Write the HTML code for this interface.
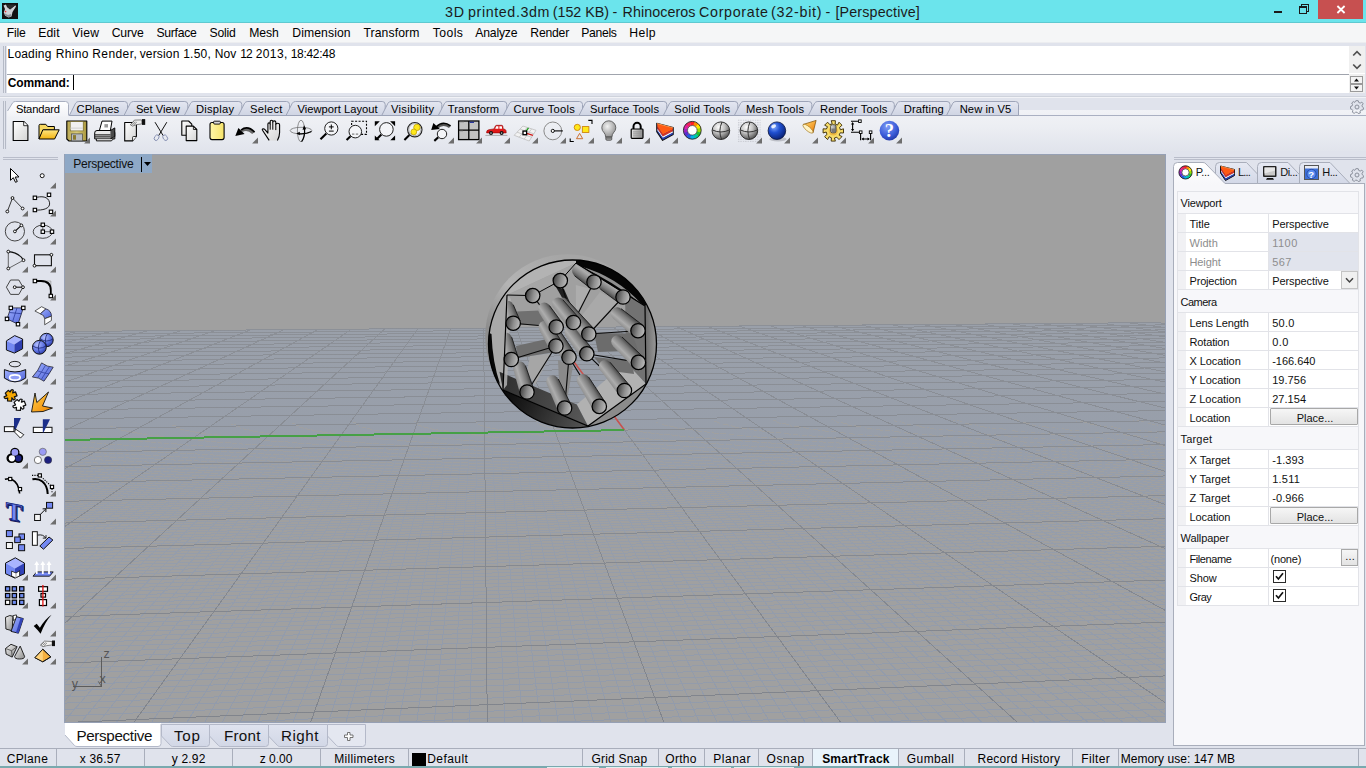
<!DOCTYPE html>
<html lang="en"><head><meta charset="utf-8"><title>3D printed.3dm - Rhinoceros</title>
<style>
*{box-sizing:border-box;margin:0;padding:0}
html,body{width:1366px;height:768px;overflow:hidden}
body{position:relative;background:#e0e3ec;font-family:"Liberation Sans",sans-serif;font-size:12px;color:#000;-webkit-font-smoothing:antialiased}
.a{position:absolute;white-space:nowrap}
#title{left:0;top:0;width:1366px;height:23px;background:#6be4ec;border-bottom:1px solid #5fc9d0}
#menu{left:0;top:23px;width:1366px;height:19px;background:#f5f6f7}
#menul{left:0;top:42px;width:1366px;height:1px;background:#ecedf0}
#hist{left:7px;top:46px;width:1358px;height:47px;background:#fff}
#hsep{left:7px;top:74px;width:1342px;height:1px;background:#a0a4ad}
.grip{background:#b5bac6;width:1px}
</style></head><body>

<div class="a" id="title"></div>
<svg class="a" style="left:2px;top:3px" width="16" height="16" viewBox="0 0 16 16">
<rect width="16" height="16" fill="#111"/>
<path d="M1.5 2.5 L4 1.5 L5 4 L8 6.5 L13.5 2.2 L14 3.5 L10.5 9 L9.5 13.5 L6.5 14.5 L3 12.5 L1.8 9.5 L3 6 Z" fill="#cfd2d6"/>
<path d="M5 1.5 L13 1.5 L13.2 2.3 L8.2 6.2 L5.6 4.2 Z" fill="#2b2b2b"/>
<path d="M2 10 L4 13 L7 14.3 L8.8 13.6 L9.2 11 L6 12 Z" fill="#8b9097"/>
<circle cx="3.6" cy="8.6" r="0.8" fill="#e33"/>
</svg>
<div class="a" style="left:1274px;top:11px;width:8px;height:2px;background:#1a1a1a"></div>
<svg class="a" style="left:1298px;top:3px" width="12" height="12" viewBox="0 0 12 12" shape-rendering="crispEdges">
<path d="M3.5 3.5V1.5H10.5V8.5H8.5" fill="none" stroke="#1a1a1a" stroke-width="1"/>
<rect x="1.5" y="4.5" width="7" height="6" fill="none" stroke="#1a1a1a" stroke-width="1"/><rect x="1" y="3" width="8" height="2" fill="#1a1a1a"/></svg>
<div class="a" style="left:1318px;top:0;width:45px;height:19px;background:#c75050"></div>
<svg class="a" style="left:1336px;top:5px" width="10" height="9" viewBox="0 0 10 9"><path d="M1.4 1L8.6 8M8.6 1L1.4 8" stroke="#fff" stroke-width="1.8"/></svg>
<div class="a" id="menu"></div><div class="a" id="menul"></div>
<div class="a grip" style="left:3px;top:46px;height:47px"></div><div class="a grip" style="left:5px;top:46px;height:47px"></div>
<div class="a" id="hist"></div><div class="a" id="hsep"></div>
<div class="a" style="left:1349px;top:46px;width:16px;height:27px;background:#f0f0f0"></div>
<div class="a" style="left:1349px;top:74px;width:16px;height:19px;background:#f0f0f0"></div>
<svg class="a" style="left:1352px;top:49px" width="10" height="22" viewBox="0 0 10 22"><path d="M1.2 6.5L5 2.7L8.8 6.5M1.2 15.5L5 19.3L8.8 15.5" fill="none" stroke="#505050" stroke-width="1.7"/></svg>
<svg class="a" style="left:1350px;top:75px" width="14" height="18" viewBox="0 0 14 18"><rect x="0.5" y="1.5" width="12" height="7" fill="#f3f3f3" stroke="#9a9a9a"/><rect x="0.5" y="9.5" width="12" height="7" fill="#f3f3f3" stroke="#9a9a9a"/><path d="M4 6.5L6.5 3.5L9 6.5ZM4 11.5L6.5 14.5L9 11.5Z" fill="#111"/></svg>
<div class="a" style="left:73px;top:75px;width:1px;height:15px;background:#000"></div>
<div class="a" style="left:0;top:96px;width:1366px;height:1px;background:#cfd3dc"></div><div class="a" style="left:0;top:97px;width:1366px;height:1px;background:#f2f3f7"></div>
<div class="a" style="left:7px;top:110px;width:1359px;height:41px;background:linear-gradient(#f1f2f6,#eceef3 40%,#e1e4ec)"></div>
<div class="a grip" style="left:3px;top:101px;height:48px"></div><div class="a grip" style="left:5px;top:101px;height:48px"></div>
<svg class="a" style="left:0;top:98px" width="1366" height="20" viewBox="0 98 1366 20"><defs><linearGradient id="tg" x1="0" y1="0" x2="0" y2="1"><stop offset="0" stop-color="#e4e7f1"/><stop offset="1" stop-color="#cfd4e3"/></linearGradient><linearGradient id="tga" x1="0" y1="0" x2="0" y2="1"><stop offset="0" stop-color="#ffffff"/><stop offset="1" stop-color="#f1f2f6"/></linearGradient></defs><path d="M69 115.5H1366" stroke="#aab0c2" stroke-width="1"/><path d="M69.3 115.5 L75.6 103.2 Q76.5 101.5 78.9 101.5 H124.5 Q127.5 101.5 127.5 104.5 V115.5 Z" fill="url(#tg)" stroke="#9da4b8" stroke-width="1"/><path d="M124.0 115.5 L130.3 103.2 Q131.2 101.5 133.6 101.5 H184.8 Q187.8 101.5 187.8 104.5 V115.5 Z" fill="url(#tg)" stroke="#9da4b8" stroke-width="1"/><path d="M184.3 115.5 L190.6 103.2 Q191.5 101.5 193.9 101.5 H238.8 Q241.8 101.5 241.8 104.5 V115.5 Z" fill="url(#tg)" stroke="#9da4b8" stroke-width="1"/><path d="M238.3 115.5 L244.6 103.2 Q245.5 101.5 247.9 101.5 H286.5 Q289.5 101.5 289.5 104.5 V115.5 Z" fill="url(#tg)" stroke="#9da4b8" stroke-width="1"/><path d="M286.0 115.5 L292.3 103.2 Q293.2 101.5 295.6 101.5 H382.2 Q385.2 101.5 385.2 104.5 V115.5 Z" fill="url(#tg)" stroke="#9da4b8" stroke-width="1"/><path d="M381.7 115.5 L388.0 103.2 Q388.9 101.5 391.3 101.5 H438.8 Q441.8 101.5 441.8 104.5 V115.5 Z" fill="url(#tg)" stroke="#9da4b8" stroke-width="1"/><path d="M438.3 115.5 L444.6 103.2 Q445.5 101.5 447.9 101.5 H503.8 Q506.8 101.5 506.8 104.5 V115.5 Z" fill="url(#tg)" stroke="#9da4b8" stroke-width="1"/><path d="M503.3 115.5 L509.6 103.2 Q510.5 101.5 512.9 101.5 H579.5 Q582.5 101.5 582.5 104.5 V115.5 Z" fill="url(#tg)" stroke="#9da4b8" stroke-width="1"/><path d="M579.0 115.5 L585.3 103.2 Q586.2 101.5 588.6 101.5 H663.8 Q666.8 101.5 666.8 104.5 V115.5 Z" fill="url(#tg)" stroke="#9da4b8" stroke-width="1"/><path d="M663.3 115.5 L669.6 103.2 Q670.5 101.5 672.9 101.5 H734.8 Q737.8 101.5 737.8 104.5 V115.5 Z" fill="url(#tg)" stroke="#9da4b8" stroke-width="1"/><path d="M734.3 115.5 L740.6 103.2 Q741.5 101.5 743.9 101.5 H808.8 Q811.8 101.5 811.8 104.5 V115.5 Z" fill="url(#tg)" stroke="#9da4b8" stroke-width="1"/><path d="M808.3 115.5 L814.6 103.2 Q815.5 101.5 817.9 101.5 H891.3 Q894.3 101.5 894.3 104.5 V115.5 Z" fill="url(#tg)" stroke="#9da4b8" stroke-width="1"/><path d="M890.8 115.5 L897.1 103.2 Q898.0 101.5 900.4 101.5 H947.0 Q950.0 101.5 950.0 104.5 V115.5 Z" fill="url(#tg)" stroke="#9da4b8" stroke-width="1"/><path d="M946.5 115.5 L952.8 103.2 Q953.7 101.5 956.1 101.5 H1015.5 Q1018.5 101.5 1018.5 104.5 V115.5 Z" fill="url(#tg)" stroke="#9da4b8" stroke-width="1"/><path d="M7.5 111 L12.8 102.6 Q13.6 101.5 15.5 101.5 H65.5 Q68.5 101.5 68.5 104.5 V116.5 H7.5 Z" fill="url(#tga)"/><path d="M7.5 111 L12.8 102.6 Q13.6 101.5 15.5 101.5 H65.5 Q68.5 101.5 68.5 104.5 V115.5" fill="none" stroke="#a9afc0" stroke-width="1"/></svg>
<svg class="a" style="left:1350px;top:100px" width="14" height="14" viewBox="-7 -7 14 14"><g fill="none" stroke="#8a8f9b" stroke-width="1"><circle r="2"/><path d="M-1.2 -6.3H1.2L1.7 -4.6L3.2 -3.9L4.8 -4.9L6.2 -3.2L5 -1.7L5.3 -0.2L6.6 0.8L5.9 3L4.2 3L3.1 4.2L3.3 6L1.2 6.5L0 5.2L-1.6 5.3L-2.8 6.4L-4.6 5.2L-4.2 3.6L-5.1 2.3L-6.6 1.8L-6.5 -0.4L-5 -1L-4.5 -2.5L-5.3 -4L-3.7 -5.4L-2.3 -4.6Z"/></g></svg>
<svg class="a" style="left:1350px;top:168px" width="14" height="14" viewBox="-7 -7 14 14"><g fill="none" stroke="#8a8f9b" stroke-width="1"><circle r="2"/><path d="M-1.2 -6.3H1.2L1.7 -4.6L3.2 -3.9L4.8 -4.9L6.2 -3.2L5 -1.7L5.3 -0.2L6.6 0.8L5.9 3L4.2 3L3.1 4.2L3.3 6L1.2 6.5L0 5.2L-1.6 5.3L-2.8 6.4L-4.6 5.2L-4.2 3.6L-5.1 2.3L-6.6 1.8L-6.5 -0.4L-5 -1L-4.5 -2.5L-5.3 -4L-3.7 -5.4L-2.3 -4.6Z"/></g></svg>
<div class="a" style="left:0;top:748px;width:1366px;height:18px;background:#e0e3ec;border-top:1px solid #a9aebb"></div>
<div class="a" style="left:0;top:766px;width:1366px;height:2px;background:#79a9ae"></div>
<div class="a" style="left:547px;top:767px;width:52px;height:1px;background:#e4eef0"></div>
<div class="a" style="left:606px;top:767px;width:62px;height:1px;background:#e4eef0"></div>
<div class="a" style="left:672px;top:767px;width:59px;height:1px;background:#e4eef0"></div>
<div class="a" style="left:734px;top:767px;width:60px;height:1px;background:#e4eef0"></div>
<div class="a" style="left:813px;top:749px;width:85px;height:17px;background:#e9f3fb"></div>
<div class="a" style="left:56px;top:749px;width:1px;height:17px;background:#a9aebb"></div>
<div class="a" style="left:144px;top:749px;width:1px;height:17px;background:#a9aebb"></div>
<div class="a" style="left:232px;top:749px;width:1px;height:17px;background:#a9aebb"></div>
<div class="a" style="left:320px;top:749px;width:1px;height:17px;background:#a9aebb"></div>
<div class="a" style="left:408px;top:749px;width:1px;height:17px;background:#a9aebb"></div>
<div class="a" style="left:582px;top:749px;width:1px;height:17px;background:#a9aebb"></div>
<div class="a" style="left:658px;top:749px;width:1px;height:17px;background:#a9aebb"></div>
<div class="a" style="left:704px;top:749px;width:1px;height:17px;background:#a9aebb"></div>
<div class="a" style="left:758px;top:749px;width:1px;height:17px;background:#a9aebb"></div>
<div class="a" style="left:812px;top:749px;width:1px;height:17px;background:#a9aebb"></div>
<div class="a" style="left:898px;top:749px;width:1px;height:17px;background:#a9aebb"></div>
<div class="a" style="left:964px;top:749px;width:1px;height:17px;background:#a9aebb"></div>
<div class="a" style="left:1072px;top:749px;width:1px;height:17px;background:#a9aebb"></div>
<div class="a" style="left:1118px;top:749px;width:1px;height:17px;background:#a9aebb"></div>
<div class="a" style="left:1358px;top:749px;width:1px;height:17px;background:#a9aebb"></div>
<div class="a" style="left:412px;top:753px;width:14px;height:13px;background:#000"></div>
<svg class="a" style="left:60px;top:722px" width="320" height="26" viewBox="60 722 320 26"><defs><linearGradient id="vg" x1="0" y1="0" x2="0" y2="1"><stop offset="0" stop-color="#dfe3ef"/><stop offset="1" stop-color="#d2d7e6"/></linearGradient></defs><path d="M327.5 724.5 H365.5 V743.5 Q365.5 746.5 362.5 746.5 H338.5 Q337.5 746.5 336.5 745.5 L327.5 736 Z" fill="#e4e7f0" stroke="#b4b9c9" stroke-width="1"/><path d="M161.5 724.5 H209.5 V743.5 Q209.5 746.5 206.5 746.5 H172.5 Q171.5 746.5 170.5 745.5 L161.5 736 Z" fill="url(#vg)" stroke="#b4b9c9" stroke-width="1"/><path d="M209.5 724.5 H268.5 V743.5 Q268.5 746.5 265.5 746.5 H220.5 Q219.5 746.5 218.5 745.5 L209.5 736 Z" fill="url(#vg)" stroke="#b4b9c9" stroke-width="1"/><path d="M268.5 724.5 H327.5 V743.5 Q327.5 746.5 324.5 746.5 H279.5 Q278.5 746.5 277.5 745.5 L268.5 736 Z" fill="url(#vg)" stroke="#b4b9c9" stroke-width="1"/><path d="M65 723 H161 V743.5 Q161 746.5 158 746.5 H77 Q75.5 746.5 74.5 745.5 L65 735 Z" fill="#fff"/><path d="M65 735 L74.5 745.5 Q75.5 746.5 77 746.5 H158 Q161 746.5 161 743.5 V724" fill="none" stroke="#b4b9c9" stroke-width="1"/><path d="M347.5 732.5h2.5v2.5h3v2.5h-3v3h-2.5v-3h-3v-2.5h3z" fill="#fff" stroke="#666" stroke-width="0.9"/></svg>
<svg class="a" style="left:64px;top:154px;background:#a0a0a0" width="1102" height="569" viewBox="0 0 1102 569">
<defs><linearGradient id="gmn" gradientUnits="userSpaceOnUse" x1="0" y1="170" x2="0" y2="568"><stop offset="0" stop-color="#9aa0aa"/><stop offset="1" stop-color="#929bab"/></linearGradient><linearGradient id="gmj" gradientUnits="userSpaceOnUse" x1="0" y1="170" x2="0" y2="568"><stop offset="0" stop-color="#8c9097"/><stop offset="1" stop-color="#80848c"/></linearGradient></defs>
<g shape-rendering="crispEdges" fill="none" stroke-width="1"><path stroke="url(#gmn)" d="M1104 170.3L1091.1 168.6M1104 170.6L1088.3 168.7M1104 171L1085.4 168.7M1104 171.4L1082.5 168.7M1104 171.8L1079.6 168.7M1104 172.3L1076.7 168.8M1104 172.7L1073.8 168.8M1104 173.1L1070.9 168.8M1104 173.5L1068.1 168.8M1104 174.3L1062.3 168.9M1104 174.8L1059.4 168.9M1104 175.2L1056.5 168.9M1104 175.6L1053.6 169M1104 176.1L1050.7 169M1104 176.5L1047.8 169M1104 177L1044.9 169M1104 177.4L1042 169M1104 177.9L1039.1 169.1M1104 178.8L1033.2 169.1M1104 179.3L1030.3 169.1M1104 179.8L1027.4 169.2M1104 180.3L1024.5 169.2M1104 180.8L1021.6 169.2M1104 181.3L1018.7 169.2M1104 181.8L1015.7 169.3M1104 182.3L1012.8 169.3M1104 182.8L1009.9 169.3M1104 183.8L1004 169.4M1104 184.3L1001.1 169.4M1104 184.9L998.2 169.4M1104 185.4L995.2 169.4M1104 186L992.3 169.5M1104 186.5L989.4 169.5M1104 187.1L986.4 169.5M1104 187.6L983.5 169.5M1104 188.2L980.6 169.5M1104 189.3L974.7 169.6M1104 189.9L971.7 169.6M1104 190.5L968.8 169.6M1104 191.1L965.8 169.7M1104 191.7L962.9 169.7M1104 192.3L959.9 169.7M1104 193L957 169.7M1104 193.6L954 169.8M1104 194.2L951.1 169.8M1104 195.5L945.2 169.8M1104 196.2L942.2 169.9M1104 196.9L939.2 169.9M1104 197.5L936.3 169.9M1104 198.2L933.3 169.9M1104 198.9L930.3 170M1104 199.6L927.4 170M1104 200.3L924.4 170M1104 201L921.4 170M1104 202.5L915.5 170.1M1104 203.2L912.5 170.1M1104 204L909.5 170.1M1104 204.7L906.5 170.2M1104 205.5L903.5 170.2M1104 206.3L900.5 170.2M1104 207.1L897.6 170.2M1104 207.9L894.6 170.2M1104 208.7L891.6 170.3M1104 210.4L885.6 170.3M1104 211.2L882.6 170.3M1104 212.1L879.6 170.4M1104 213L876.6 170.4M1104 213.8L873.6 170.4M1104 214.7L870.6 170.4M1104 215.6L867.6 170.5M1104 216.6L864.6 170.5M1104 217.5L861.6 170.5M1104 219.4L855.6 170.6M1104 220.4L852.5 170.6M1104 221.4L849.5 170.6M1104 222.4L846.5 170.6M1104 223.4L843.5 170.7M1104 224.4L840.5 170.7M1104 225.5L837.5 170.7M1104 226.5L834.4 170.7M1104 227.6L831.4 170.8M1104 229.8L825.4 170.8M1104 231L822.3 170.8M1104 569.4L1070.9 571M1104 232.1L819.3 170.9M1104 562L910 571M1104 233.3L816.3 170.9M1104 554.8L749.1 571M1104 234.5L813.2 170.9M1104 547.8L588.1 571M1104 235.7L810.2 170.9M1104 541L427.2 571M1104 236.9L807.1 171M1104 534.4L266.3 571M1104 238.1L804.1 171M1104 528L105.4 571M1104 239.4L801.1 171M1104 515.7L-2 562M1104 242L795 171.1M1104 509.8L-2 555.5M1104 243.3L791.9 171.1M1104 504.1L-2 549.2M1104 244.7L788.9 171.1M1104 498.5L-2 543M1104 246L785.8 171.1M1104 493.1L-2 537M1104 247.4L782.8 171.2M1104 487.8L-2 531.1M1104 248.9L779.7 171.2M1104 482.7L-2 525.4M1104 250.3L776.7 171.2M1104 477.6L-2 519.8M1104 251.8L773.6 171.2M1104 472.7L-2 514.4M1104 253.3L770.5 171.3M1104 463.3L-2 504M1104 256.4L764.4 171.3M1104 458.7L-2 498.9M1104 258L761.4 171.3M1104 454.3L-2 494M1104 259.6L758.3 171.4M1104 450L-2 489.2M1104 261.2L755.2 171.4M1104 445.7L-2 484.5M1104 262.9L752.1 171.4M1104 441.6L-2 479.9M1104 264.6L749.1 171.4M1104 437.5L-2 475.4M1104 266.4L746 171.5M1104 433.6L-2 471.1M1104 268.1L742.9 171.5M1104 429.7L-2 466.8M1104 269.9L739.8 171.5M1104 422.2L-2 458.5M1104 273.7L733.7 171.6M1104 418.6L-2 454.5M1104 275.6L730.6 171.6M1104 415.1L-2 450.6M1104 277.6L727.5 171.6M1104 411.6L-2 446.7M1104 279.6L724.4 171.6M1104 408.2L-2 443M1104 281.6L721.3 171.7M1104 404.9L-2 439.3M1104 283.7L718.3 171.7M1104 401.6L-2 435.7M1104 285.8L715.2 171.7M1104 398.4L-2 432.1M1104 288L712.1 171.7M1104 395.3L-2 428.6M1104 290.2L709 171.8M1104 389.2L-2 421.9M1104 294.9L702.8 171.8M1104 386.3L-2 418.7M1104 297.2L699.7 171.8M1104 383.4L-2 415.4M1104 299.7L696.6 171.9M1104 380.5L-2 412.3M1104 302.2L693.5 171.9M1104 377.7L-2 409.2M1104 304.7L690.4 171.9M1104 375L-2 406.2M1104 307.3L687.3 171.9M1104 372.3L-2 403.2M1104 310L684.1 172M1104 369.7L-2 400.3M1104 312.7L681 172M1104 367.1L-2 397.4M1104 315.5L677.9 172M1104 362.1L-2 391.9M1104 321.4L671.7 172.1M1104 359.6L-2 389.2M1104 324.4L668.6 172.1M1104 357.2L-2 386.5M1104 327.5L665.4 172.1M1104 354.9L-2 383.9M1104 330.7L662.3 172.1M1104 352.5L-2 381.3M1104 333.9L659.2 172.2M1104 350.2L-2 378.8M1104 337.3L656.1 172.2M1104 348L-2 376.3M1104 340.8L652.9 172.2M1104 345.8L-2 373.8M1104 344.3L649.8 172.2M1104 343.6L-2 371.4M1104 347.9L646.7 172.3M1104 339.4L-2 366.7M1104 355.5L640.4 172.3M1104 337.3L-2 364.4M1104 359.5L637.3 172.3M1104 335.3L-2 362.2M1104 363.6L634.1 172.4M1104 333.3L-2 360M1104 367.8L631 172.4M1104 331.3L-2 357.8M1104 372.1L627.9 172.4M1104 329.4L-2 355.6M1104 376.6L624.7 172.4M1104 327.5L-2 353.5M1104 381.2L621.6 172.5M1104 325.6L-2 351.5M1104 386L618.4 172.5M1104 323.7L-2 349.4M1104 390.9L615.3 172.5M1104 320.1L-2 345.4M1104 401.2L609 172.6M1104 318.3L-2 343.4M1104 406.7L605.8 172.6M1104 316.6L-2 341.5M1104 412.3L602.6 172.6M1104 314.9L-2 339.6M1104 418.1L599.5 172.7M1104 313.2L-2 337.7M1104 424.2L596.3 172.7M1104 311.5L-2 335.9M1104 430.4L593.2 172.7M1104 309.9L-2 334.1M1104 436.9L590 172.7M1104 308.3L-2 332.3M1104 443.6L586.8 172.8M1104 306.7L-2 330.5M1104 450.6L583.7 172.8M1104 303.6L-2 327.1M1104 465.5L577.3 172.8M1104 302L-2 325.4M1104 473.4L574.1 172.9M1104 300.5L-2 323.7M1104 481.6L571 172.9M1104 299L-2 322.1M1104 490.2L567.8 172.9M1104 297.6L-2 320.4M1104 499.2L564.6 172.9M1104 296.1L-2 318.8M1104 508.5L561.4 173M1104 294.7L-2 317.3M1104 518.3L558.2 173M1104 293.3L-2 315.7M1104 528.6L555.1 173M1104 291.9L-2 314.2M1104 539.3L551.9 173M1104 289.2L-2 311.1M1104 562.5L545.5 173.1M1104 287.8L-2 309.7M1098.4 571L542.3 173.1M1104 286.5L-2 308.2M1080.7 571L539.1 173.1M1104 285.2L-2 306.8M1062.9 571L535.9 173.2M1104 283.9L-2 305.3M1045.1 571L532.7 173.2M1104 282.7L-2 303.9M1027.4 571L529.5 173.2M1104 281.4L-2 302.6M1009.6 571L526.3 173.2M1104 280.2L-2 301.2M991.8 571L523.1 173.3M1104 279L-2 299.8M974.1 571L519.9 173.3M1104 276.6L-2 297.2M938.5 571L513.5 173.4M1104 275.4L-2 295.9M920.8 571L510.3 173.4M1104 274.2L-2 294.6M903 571L507.1 173.4M1104 273.1L-2 293.3M885.2 571L503.8 173.4M1104 272L-2 292.1M867.5 571L500.6 173.5M1104 270.8L-2 290.8M849.7 571L497.4 173.5M1104 269.7L-2 289.6M831.9 571L494.2 173.5M1104 268.6L-2 288.4M814.2 571L491 173.5M1104 267.6L-2 287.2M796.4 571L487.7 173.6M1104 265.4L-2 284.8M760.9 571L481.3 173.6M1104 264.4L-2 283.7M743.1 571L478.1 173.6M1104 263.4L-2 282.5M725.4 571L474.8 173.7M1104 262.3L-2 281.4M707.6 571L471.6 173.7M1104 261.3L-2 280.3M689.8 571L468.4 173.7M1104 260.3L-2 279.2M672.1 571L465.1 173.7M1104 259.3L-2 278.1M654.3 571L461.9 173.8M1104 258.4L-2 277M636.5 571L458.6 173.8M1104 257.4L-2 276M618.8 571L455.4 173.8M1104 255.5L-2 273.9M583.2 571L448.9 173.9M1104 254.6L-2 272.8M565.5 571L445.6 173.9M1104 253.7L-2 271.8M547.7 571L442.4 173.9M1104 252.7L-2 270.8M529.9 571L439.1 174M1104 251.8L-2 269.8M512.2 571L435.9 174M1104 251L-2 268.8M494.4 571L432.6 174M1104 250.1L-2 267.8M476.6 571L429.4 174M1104 249.2L-2 266.9M458.9 571L426.1 174.1M1104 248.3L-2 265.9M441.1 571L422.8 174.1M1104 246.6L-2 264M405.6 571L416.3 174.1M1104 245.8L-2 263.1M387.8 571L413 174.2M1104 245L-2 262.2M370 571L409.8 174.2M1104 244.1L-2 261.3M352.3 571L406.5 174.2M1104 243.3L-2 260.4M334.5 571L403.2 174.2M1104 242.5L-2 259.5M316.8 571L399.9 174.3M1104 241.7L-2 258.6M299 571L396.7 174.3M1104 240.9L-2 257.7M281.2 571L393.4 174.3M1104 240.2L-2 256.9M263.5 571L390.1 174.4M1104 238.6L-2 255.1M227.9 571L383.5 174.4M1104 237.9L-2 254.3M210.2 571L380.2 174.4M1104 237.1L-2 253.5M192.4 571L376.9 174.5M1104 236.4L-2 252.7M174.6 571L373.7 174.5M1104 235.6L-2 251.8M156.9 571L370.4 174.5M1104 234.9L-2 251M139.1 571L367.1 174.5M1104 234.2L-2 250.2M121.3 571L363.8 174.6M1104 233.5L-2 249.4M103.6 571L360.5 174.6M1104 232.8L-2 248.7M85.8 571L357.2 174.6M1104 231.4L-2 247.1M50.3 571L350.6 174.7M1104 230.7L-2 246.4M32.5 571L347.2 174.7M1104 230L-2 245.6M14.7 571L343.9 174.7M1104 229.3L-2 244.9M-2 569.8L340.6 174.8M1104 228.7L-2 244.1M-2 550.2L337.3 174.8M1104 228L-2 243.4M-2 532.1L334 174.8M1104 227.3L-2 242.7M-2 515.4L330.7 174.8M1104 226.7L-2 241.9M-2 499.9L327.4 174.9M1104 226L-2 241.2M-2 485.4L324 174.9M1104 224.8L-2 239.8M-2 459.3L317.4 174.9M1104 224.1L-2 239.1M-2 447.5L314.1 175M1104 223.5L-2 238.4M-2 436.5L310.7 175M1104 222.9L-2 237.7M-2 426L307.4 175M1104 222.3L-2 237.1M-2 416.2L304.1 175.1M1104 221.7L-2 236.4M-2 406.9L300.7 175.1M1104 221.1L-2 235.7M-2 398.2L297.4 175.1M1104 220.5L-2 235.1M-2 389.9L294 175.1M1104 219.9L-2 234.4M-2 382L290.7 175.2M1104 218.7L-2 233.1M-2 367.4L284 175.2M1104 218.2L-2 232.5M-2 360.6L280.7 175.2M1104 217.6L-2 231.9M-2 354.2L277.3 175.3M1104 217L-2 231.2M-2 348L274 175.3M1104 216.5L-2 230.6M-2 342.1L270.6 175.3M1104 215.9L-2 230M-2 336.5L267.2 175.4M1104 215.4L-2 229.4M-2 331.1L263.9 175.4M1104 214.8L-2 228.8M-2 325.9L260.5 175.4M1104 214.3L-2 228.2M-2 321L257.2 175.4M1104 213.2L-2 227M-2 311.7L250.4 175.5M1104 212.7L-2 226.4M-2 307.3L247.1 175.5M1104 212.1L-2 225.8M-2 303.1L243.7 175.5M1104 211.6L-2 225.3M-2 299L240.3 175.6M1104 211.1L-2 224.7M-2 295.1L236.9 175.6M1104 210.6L-2 224.1M-2 291.3L233.6 175.6M1104 210.1L-2 223.6M-2 287.7L230.2 175.7M1104 209.6L-2 223M-2 284.2L226.8 175.7M1104 209.1L-2 222.4M-2 280.8L223.4 175.7M1104 208.1L-2 221.4M-2 274.3L216.7 175.8M1104 207.6L-2 220.8M-2 271.2L213.3 175.8M1104 207.1L-2 220.3M-2 268.3L209.9 175.8M1104 206.7L-2 219.8M-2 265.4L206.5 175.9M1104 206.2L-2 219.2M-2 262.6L203.1 175.9M1104 205.7L-2 218.7M-2 259.9L199.7 175.9M1104 205.2L-2 218.2M-2 257.3L196.3 175.9M1104 204.8L-2 217.7M-2 254.7L192.9 176M1104 204.3L-2 217.2M-2 252.2L189.5 176M1104 203.4L-2 216.1M-2 247.5L182.7 176M1104 202.9L-2 215.6M-2 245.2L179.3 176.1M1104 202.5L-2 215.2M-2 243L175.8 176.1M1104 202.1L-2 214.7M-2 240.9L172.4 176.1M1104 201.6L-2 214.2M-2 238.8L169 176.2M1104 201.2L-2 213.7M-2 236.8L165.6 176.2M1104 200.7L-2 213.2M-2 234.8L162.2 176.2M1104 200.3L-2 212.7M-2 232.8L158.8 176.2M1104 199.9L-2 212.3M-2 231L155.3 176.3M1104 199L-2 211.3M-2 227.3L148.5 176.3M1104 198.6L-2 210.9M-2 225.6L145 176.4M1104 198.2L-2 210.4M-2 223.9L141.6 176.4M1104 197.8L-2 209.9M-2 222.2L138.2 176.4M1104 197.4L-2 209.5M-2 220.6L134.7 176.4M1104 197L-2 209M-2 219L131.3 176.5M1104 196.6L-2 208.6M-2 217.5L127.9 176.5M1104 196.2L-2 208.1M-2 216L124.4 176.5M1104 195.8L-2 207.7M-2 214.5L121 176.5M1104 195L-2 206.8M-2 211.6L114.1 176.6M1104 194.6L-2 206.4M-2 210.2L110.6 176.6M1104 194.2L-2 206M-2 208.9L107.2 176.7M1104 193.8L-2 205.5M-2 207.6L103.7 176.7M1104 193.4L-2 205.1M-2 206.3L100.3 176.7M1104 193.1L-2 204.7M-2 205L96.8 176.7M1104 192.7L-2 204.3M-2 203.7L93.3 176.8M1104 192.3L-2 203.9M-2 202.5L89.9 176.8M1104 191.9L-2 203.5M-2 201.3L86.4 176.8M1104 191.2L-2 202.7M-2 199L79.5 176.9M1104 190.8L-2 202.2M-2 197.9L76 176.9M1104 190.5L-2 201.8M-2 196.8L72.5 176.9M1104 190.1L-2 201.5M-2 195.7L69 177M1104 189.8L-2 201.1M-2 194.7L65.6 177M1104 189.4L-2 200.7M-2 193.6L62.1 177M1104 189.1L-2 200.3M-2 192.6L58.6 177.1M1104 188.7L-2 199.9M-2 191.6L55.1 177.1M1104 188.4L-2 199.5M-2 190.6L51.6 177.1M1104 187.7L-2 198.7M-2 188.7L44.6 177.2M1104 187.3L-2 198.4M-2 187.8L41.2 177.2M1104 187L-2 198M-2 186.9L37.7 177.2M1104 186.7L-2 197.6M-2 186L34.2 177.3M1104 186.3L-2 197.3M-2 185.1L30.7 177.3M1104 186L-2 196.9M-2 184.2L27.2 177.3M1104 185.7L-2 196.5M-2 183.4L23.6 177.3M1104 185.4L-2 196.2M-2 182.5L20.1 177.4M1104 185L-2 195.8M-2 181.7L16.6 177.4M1104 184.4L-2 195.1M-2 180.1L9.6 177.5M1104 184.1L-2 194.7M-2 179.3L6.1 177.5M1104 183.8L-2 194.4M-2 178.5L2.6 177.5M1104 183.4L-2 194M-2 177.8L-0.9 177.5M1104 183.1L-2 193.7M1104 182.8L-2 193.4M1104 182.5L-2 193M1104 182.2L-2 192.7M1104 181.9L-2 192.3M1104 181.3L-2 191.7M1104 181L-2 191.3M1104 180.7L-2 191M1104 180.4L-2 190.7M1104 180.1L-2 190.4M1104 179.8L-2 190M1104 179.5L-2 189.7M1104 179.2L-2 189.4M1104 179L-2 189.1M1104 178.4L-2 188.4M1104 178.1L-2 188.1M1104 177.8L-2 187.8M1104 177.5L-2 187.5M1104 177.3L-2 187.2M1104 177L-2 186.9M1104 176.7L-2 186.6M1104 176.5L-2 186.3M1104 176.2L-2 186M1104 175.6L-2 185.4M1104 175.4L-2 185.1M1104 175.1L-2 184.8M1104 174.9L-2 184.5M1104 174.6L-2 184.3M1104 174.3L-2 184M1104 174.1L-2 183.7M1104 173.8L-2 183.4M1104 173.6L-2 183.1M1104 173.1L-2 182.6M1104 172.8L-2 182.3M1104 172.6L-2 182M1104 172.3L-2 181.7M1104 172.1L-2 181.5M1104 171.8L-2 181.2M1104 171.6L-2 180.9M1104 171.3L-2 180.7M1104 171.1L-2 180.4M1104 170.6L-2 179.9M1104 170.4L-2 179.6M1104 170.2L-2 179.3M1104 169.9L-2 179.1M1102.7 169.7L-2 178.8M1100.9 169.5L-2 178.6M1099.2 169.3L-2 178.3M1097.4 169.1L-2 178.1M1095.7 168.8L-2 177.8"/><path stroke="url(#gmj)" d="M1104 169.9L1094 168.6M1104 173.9L1065.2 168.9M1104 178.4L1036.1 169.1M1104 183.3L1007 169.3M1104 188.8L977.6 169.6M1104 194.9L948.1 169.8M1104 201.8L918.4 170.1M1104 209.5L888.6 170.3M1104 218.4L858.6 170.5M1104 228.7L828.4 170.8M1104 521.8L-2 568.7M1104 240.7L798 171M1104 468L-2 509.1M1104 254.8L767.5 171.3M1104 425.9L-2 462.6M1104 271.8L736.8 171.5M1104 392.2L-2 425.3M1104 292.5L705.9 171.8M1104 364.6L-2 394.6M1104 318.4L674.8 172M1104 341.5L-2 369.1M1104 351.7L643.5 172.3M1104 321.9L-2 347.4M1104 396L612.1 172.5M1104 305.1L-2 328.8M1104 457.9L580.5 172.8M1104 290.5L-2 312.6M1104 550.6L548.7 173.1M1104 277.8L-2 298.5M956.3 571L516.7 173.3M1104 266.5L-2 286M778.7 571L484.5 173.6M1104 256.5L-2 274.9M601 571L452.1 173.9M1104 247.5L-2 265M423.3 571L419.6 174.1M1104 239.4L-2 256M245.7 571L386.8 174.4M1104 232.1L-2 247.9M68 571L353.9 174.7M1104 225.4L-2 240.5M-2 471.9L320.7 174.9M1104 219.3L-2 233.8M-2 374.5L287.4 175.2M1104 213.7L-2 227.6M-2 316.2L253.8 175.5M1104 208.6L-2 221.9M-2 277.5L220 175.7M1104 203.9L-2 216.6M-2 249.8L186.1 176M1104 199.5L-2 211.8M-2 229.1L151.9 176.3M1104 195.4L-2 207.3M-2 213L117.5 176.6M1104 191.6L-2 203.1M-2 200.2L82.9 176.9M1104 188L-2 199.1M-2 189.6L48.1 177.1M1104 184.7L-2 195.4M-2 180.9L13.1 177.4M1104 181.6L-2 192M1104 178.7L-2 188.8M1104 175.9L-2 185.7M1104 173.3L-2 182.8M1104 170.9L-2 180.1M1094 168.6L-2 177.5"/>
<path stroke="#c8524e" stroke-width="1.6" shape-rendering="auto" d="M560.4 276.1L484.5 173.6"/>
<path stroke="#46a046" stroke-width="2" d="M560.4 276.1L-2 286"/>
</g>
<g transform="translate(-64,-154)"><defs><linearGradient id="cap" x1="0" y1="0.3" x2="1" y2="0.5"><stop offset="0" stop-color="#3c3c3c"/><stop offset="0.55" stop-color="#8e8e8e"/><stop offset="1" stop-color="#bdbdbd"/></linearGradient><linearGradient id="segR" x1="0" y1="0" x2="1" y2="0"><stop offset="0" stop-color="#6a6a6a"/><stop offset="1" stop-color="#999"/></linearGradient><linearGradient id="segBL" gradientUnits="userSpaceOnUse" x1="495" y1="380" x2="590" y2="430"><stop offset="0" stop-color="#000"/><stop offset="0.35" stop-color="#1c1c1c"/><stop offset="1" stop-color="#5a5a5a"/></linearGradient><linearGradient id="wallBL" gradientUnits="userSpaceOnUse" x1="500" y1="375" x2="585" y2="410"><stop offset="0" stop-color="#2e2e2e"/><stop offset="1" stop-color="#565656"/></linearGradient><linearGradient id="band" gradientUnits="userSpaceOnUse" x1="490" y1="330" x2="560" y2="258"><stop offset="0" stop-color="#8e8e8e"/><stop offset="0.45" stop-color="#b4b4b4"/><stop offset="1" stop-color="#a6a6a6"/></linearGradient></defs><clipPath id="outside"><path clip-rule="evenodd" d="M0 0H1366V768H0Z M488.5 344.0a84.0 84.0 0 1 0 168.0 0a84.0 84.0 0 1 0 -168.0 0Z"/></clipPath><circle cx="567.1" cy="336.2" r="81.9" fill="url(#band)" clip-path="url(#outside)"/><path d="M507.0 295.0L505.2 293.7A84.0 84.0 0 0 1 576.1 260.1L576.0 263.0Z" fill="#b3b3b3"/><path d="M576.0 263.0L576.1 260.1A84.0 84.0 0 0 1 646.9 305.0L645.0 306.0Z" fill="#050505"/><path d="M645.0 306.0L646.9 305.0A84.0 84.0 0 0 1 646.3 384.2L646.0 384.0Z" fill="url(#segR)"/><path d="M646.0 384.0L646.3 384.2A84.0 84.0 0 0 1 588.1 426.5L588.0 426.0Z" fill="#8b8b8b"/><path d="M588.0 426.0L588.1 426.5A84.0 84.0 0 0 1 502.5 390.4L503.0 390.0Z" fill="url(#segBL)"/><path d="M503.0 390.0L502.5 390.4A84.0 84.0 0 0 1 505.2 293.7L507.0 295.0Z" fill="#a9a9a9"/><path d="M645.0 306.0L646.0 384.0L626.0 362.4L625.1 293.0Z" fill="#727272" /><path d="M646.0 384.0L588.0 426.0L576.8 404.6L626.0 362.4Z" fill="#b1b1b1" /><path d="M588.0 426.0L503.0 390.0L499.5 371.8L576.8 404.6Z" fill="url(#wallBL)" /><path d="M503.0 390.0L507.0 295.0L511.0 299.0L507.0 385.0Z" fill="#b2b2b2" opacity="0.85"/><path d="M517.0 311.5L550.0 310.0L556.0 326.5L519.0 324.5Z" fill="#707070" /><path d="M556.0 287.0L564.0 289.0L575.0 314.0L572.0 315.0Z" fill="#1f1f1f" /><path d="M594.0 333.0L632.0 333.5L638.0 350.0L598.0 352.0Z" fill="#6c6c6c" /><path d="M530.0 356.0L551.0 353.5L535.0 385.0L527.0 372.0Z" fill="#a6a6a6" /><path d="M558.0 360.0L573.0 366.0L567.0 400.0L559.0 382.0Z" fill="#8a8a8a" /><path d="M575.9 285.0L591.0 289.0L576.0 314.0Z" fill="#adadad" /><path d="M596.0 328.0L619.0 303.0L600.0 292.0L580.0 318.0Z" fill="#a9a9a9" /><path d="M581 266.5Q616.3 276.5 641 303.5Q613.1 281.6 581 266.5Z" fill="#8f8f8f"/><path d="M497.5 382.0 A84 84 0 0 1 489.2 333.0 L491.5 334.0 Q492.5 362.0 500.0 384.0 Z" fill="#080808"/><path d="M516.0 346.0L549.0 338.5L552.5 352.5L518.0 358.0Z" fill="#6e6e6e" /><path d="M594.0 357.0L632.0 361.0L634.0 374.0L604.0 370.0Z" fill="#6e6e6e" /><path d="M556.2 327.0L532.7 295.6M556.2 327.0L513.2 323.2M573.4 322.5L560.3 280.6M573.4 322.5L594.0 282.0M588.8 334.0L623.0 297.0M588.8 334.0L638.0 330.7M586.8 353.8L638.4 362.4M586.8 353.8L624.4 390.5M569.0 357.3L599.3 406.4M569.0 357.3L564.6 408.0M555.9 346.0L511.3 359.5M555.9 346.0L527.0 392.0" stroke="#0a0a0a" stroke-width="1.15" fill="none"/><clipPath id="hexin"><path d="M508.0 296.5L532.7 295.6L560.3 280.6L576.0 264.0L645.0 306.0L646.0 384.0L588.0 426.0L504.0 390.0Z"/></clipPath><g clip-path="url(#hexin)"><linearGradient id="pg0" gradientUnits="userSpaceOnUse" x1="618.8" y1="395.0" x2="630.0" y2="386.0"><stop offset="0" stop-color="#8c8c8c"/><stop offset="0.3" stop-color="#adadad"/><stop offset="0.72" stop-color="#787878"/><stop offset="1" stop-color="#404040"/></linearGradient><circle cx="605.2" cy="366.2" r="6.3" fill="url(#pg0)"/><path d="M618.8 395.0L630.0 386.0L610.1 362.3L600.2 370.1Z" fill="url(#pg0)" /><path d="M630.0 386.0L610.1 362.3" stroke="#1a1a1a" stroke-width="0.9" fill="none"/><linearGradient id="pg1" gradientUnits="userSpaceOnUse" x1="593.2" y1="410.2" x2="605.4" y2="402.6"><stop offset="0" stop-color="#8c8c8c"/><stop offset="0.3" stop-color="#adadad"/><stop offset="0.72" stop-color="#787878"/><stop offset="1" stop-color="#404040"/></linearGradient><circle cx="583.1" cy="380.2" r="6.3" fill="url(#pg1)"/><path d="M593.2 410.2L605.4 402.6L588.5 376.9L577.7 383.5Z" fill="url(#pg1)" /><path d="M605.4 402.6L588.5 376.9" stroke="#1a1a1a" stroke-width="0.9" fill="none"/><linearGradient id="pg2" gradientUnits="userSpaceOnUse" x1="633.3" y1="367.5" x2="643.5" y2="357.3"><stop offset="0" stop-color="#8c8c8c"/><stop offset="0.3" stop-color="#adadad"/><stop offset="0.72" stop-color="#787878"/><stop offset="1" stop-color="#404040"/></linearGradient><circle cx="617.5" cy="341.5" r="6.3" fill="url(#pg2)"/><path d="M633.3 367.5L643.5 357.3L622.0 337.0L613.0 346.0Z" fill="url(#pg2)" /><path d="M643.5 357.3L622.0 337.0" stroke="#1a1a1a" stroke-width="0.9" fill="none"/><linearGradient id="pg3" gradientUnits="userSpaceOnUse" x1="558.1" y1="411.0" x2="571.1" y2="405.0"><stop offset="0" stop-color="#8c8c8c"/><stop offset="0.3" stop-color="#adadad"/><stop offset="0.72" stop-color="#787878"/><stop offset="1" stop-color="#404040"/></linearGradient><circle cx="552.5" cy="381.6" r="6.3" fill="url(#pg3)"/><path d="M558.1 411.0L571.1 405.0L558.3 379.0L546.8 384.2Z" fill="url(#pg3)" /><path d="M571.1 405.0L558.3 379.0" stroke="#1a1a1a" stroke-width="0.9" fill="none"/><linearGradient id="pg4" gradientUnits="userSpaceOnUse" x1="633.4" y1="336.3" x2="642.6" y2="325.1"><stop offset="0" stop-color="#8c8c8c"/><stop offset="0.3" stop-color="#adadad"/><stop offset="0.72" stop-color="#787878"/><stop offset="1" stop-color="#404040"/></linearGradient><circle cx="617.1" cy="313.6" r="6.3" fill="url(#pg4)"/><path d="M633.4 336.3L642.6 325.1L621.1 308.7L613.1 318.5Z" fill="url(#pg4)" /><path d="M642.6 325.1L621.1 308.7" stroke="#1a1a1a" stroke-width="0.9" fill="none"/><linearGradient id="pg5" gradientUnits="userSpaceOnUse" x1="520.1" y1="394.1" x2="533.9" y2="389.9"><stop offset="0" stop-color="#8c8c8c"/><stop offset="0.3" stop-color="#adadad"/><stop offset="0.72" stop-color="#787878"/><stop offset="1" stop-color="#404040"/></linearGradient><circle cx="519.4" cy="367.5" r="6.3" fill="url(#pg5)"/><path d="M520.1 394.1L533.9 389.9L525.5 365.7L513.4 369.4Z" fill="url(#pg5)" /><path d="M533.9 389.9L525.5 365.7" stroke="#1a1a1a" stroke-width="0.9" fill="none"/><linearGradient id="pg6" gradientUnits="userSpaceOnUse" x1="581.0" y1="358.1" x2="592.6" y2="349.5"><stop offset="0" stop-color="#8c8c8c"/><stop offset="0.3" stop-color="#adadad"/><stop offset="0.72" stop-color="#787878"/><stop offset="1" stop-color="#404040"/></linearGradient><circle cx="570.8" cy="332.2" r="6.3" fill="url(#pg6)"/><path d="M581.0 358.1L592.6 349.5L575.9 328.5L565.8 336.0Z" fill="url(#pg6)" /><path d="M592.6 349.5L575.9 328.5" stroke="#1a1a1a" stroke-width="0.9" fill="none"/><linearGradient id="pg7" gradientUnits="userSpaceOnUse" x1="562.9" y1="361.1" x2="575.1" y2="353.5"><stop offset="0" stop-color="#8c8c8c"/><stop offset="0.3" stop-color="#adadad"/><stop offset="0.72" stop-color="#787878"/><stop offset="1" stop-color="#404040"/></linearGradient><circle cx="551.1" cy="328.5" r="6.0" fill="url(#pg7)"/><path d="M562.9 361.1L575.1 353.5L556.2 325.4L546.1 331.7Z" fill="url(#pg7)" /><path d="M575.1 353.5L556.2 325.4" stroke="#1a1a1a" stroke-width="0.9" fill="none"/><linearGradient id="pg8" gradientUnits="userSpaceOnUse" x1="627.1" y1="291.1" x2="618.9" y2="302.9"><stop offset="0" stop-color="#8c8c8c"/><stop offset="0.3" stop-color="#adadad"/><stop offset="0.72" stop-color="#787878"/><stop offset="1" stop-color="#404040"/></linearGradient><circle cx="603.9" cy="283.9" r="6.3" fill="url(#pg8)"/><path d="M627.1 291.1L618.9 302.9L600.3 289.1L607.5 278.7Z" fill="url(#pg8)" /><path d="M618.9 302.9L600.3 289.1" stroke="#1a1a1a" stroke-width="0.9" fill="none"/><linearGradient id="pg9" gradientUnits="userSpaceOnUse" x1="583.3" y1="338.7" x2="594.3" y2="329.3"><stop offset="0" stop-color="#8c8c8c"/><stop offset="0.3" stop-color="#adadad"/><stop offset="0.72" stop-color="#787878"/><stop offset="1" stop-color="#404040"/></linearGradient><circle cx="562.6" cy="303.3" r="5.7" fill="url(#pg9)"/><path d="M583.3 338.7L594.3 329.3L566.9 299.6L558.3 307.0Z" fill="url(#pg9)" /><path d="M594.3 329.3L566.9 299.6" stroke="#1a1a1a" stroke-width="0.9" fill="none"/><linearGradient id="pg10" gradientUnits="userSpaceOnUse" x1="549.7" y1="349.6" x2="562.1" y2="342.4"><stop offset="0" stop-color="#8c8c8c"/><stop offset="0.3" stop-color="#adadad"/><stop offset="0.72" stop-color="#787878"/><stop offset="1" stop-color="#404040"/></linearGradient><circle cx="544.9" cy="327.0" r="6.3" fill="url(#pg10)"/><path d="M549.7 349.6L562.1 342.4L550.3 323.9L539.4 330.2Z" fill="url(#pg10)" /><path d="M562.1 342.4L550.3 323.9" stroke="#1a1a1a" stroke-width="0.9" fill="none"/><linearGradient id="pg11" gradientUnits="userSpaceOnUse" x1="504.4" y1="361.4" x2="518.2" y2="357.6"><stop offset="0" stop-color="#8c8c8c"/><stop offset="0.3" stop-color="#adadad"/><stop offset="0.72" stop-color="#787878"/><stop offset="1" stop-color="#404040"/></linearGradient><circle cx="505.6" cy="338.9" r="6.3" fill="url(#pg11)"/><path d="M504.4 361.4L518.2 357.6L511.7 337.2L499.5 340.6Z" fill="url(#pg11)" /><path d="M518.2 357.6L511.7 337.2" stroke="#1a1a1a" stroke-width="0.9" fill="none"/><linearGradient id="pg12" gradientUnits="userSpaceOnUse" x1="567.8" y1="327.0" x2="579.0" y2="318.0"><stop offset="0" stop-color="#8c8c8c"/><stop offset="0.3" stop-color="#adadad"/><stop offset="0.72" stop-color="#787878"/><stop offset="1" stop-color="#404040"/></linearGradient><circle cx="558.1" cy="303.7" r="6.2" fill="url(#pg12)"/><path d="M567.8 327.0L579.0 318.0L562.9 299.8L553.3 307.6Z" fill="url(#pg12)" /><path d="M579.0 318.0L562.9 299.8" stroke="#1a1a1a" stroke-width="0.9" fill="none"/><linearGradient id="pg13" gradientUnits="userSpaceOnUse" x1="550.2" y1="331.0" x2="562.2" y2="323.0"><stop offset="0" stop-color="#8c8c8c"/><stop offset="0.3" stop-color="#adadad"/><stop offset="0.72" stop-color="#787878"/><stop offset="1" stop-color="#404040"/></linearGradient><circle cx="544.2" cy="308.9" r="6.3" fill="url(#pg13)"/><path d="M550.2 331.0L562.2 323.0L549.4 305.5L539.0 312.4Z" fill="url(#pg13)" /><path d="M562.2 323.0L549.4 305.5" stroke="#1a1a1a" stroke-width="0.9" fill="none"/><linearGradient id="pg14" gradientUnits="userSpaceOnUse" x1="598.2" y1="276.2" x2="589.8" y2="287.8"><stop offset="0" stop-color="#8c8c8c"/><stop offset="0.3" stop-color="#adadad"/><stop offset="0.72" stop-color="#787878"/><stop offset="1" stop-color="#404040"/></linearGradient><circle cx="578.4" cy="270.7" r="6.3" fill="url(#pg14)"/><path d="M598.2 276.2L589.8 287.8L574.7 275.9L582.1 265.6Z" fill="url(#pg14)" /><path d="M589.8 287.8L574.7 275.9" stroke="#1a1a1a" stroke-width="0.9" fill="none"/><linearGradient id="pg15" gradientUnits="userSpaceOnUse" x1="506.4" y1="325.7" x2="520.0" y2="320.7"><stop offset="0" stop-color="#8c8c8c"/><stop offset="0.3" stop-color="#adadad"/><stop offset="0.72" stop-color="#787878"/><stop offset="1" stop-color="#404040"/></linearGradient><circle cx="507.3" cy="307.0" r="6.3" fill="url(#pg15)"/><path d="M506.4 325.7L520.0 320.7L513.3 304.8L501.3 309.1Z" fill="url(#pg15)" /><path d="M520.0 320.7L513.3 304.8" stroke="#1a1a1a" stroke-width="0.9" fill="none"/><linearGradient id="pg16" gradientUnits="userSpaceOnUse" x1="555.3" y1="285.8" x2="565.3" y2="275.4"><stop offset="0" stop-color="#8c8c8c"/><stop offset="0.3" stop-color="#adadad"/><stop offset="0.72" stop-color="#787878"/><stop offset="1" stop-color="#404040"/></linearGradient><circle cx="548.7" cy="269.5" r="6.3" fill="url(#pg16)"/><path d="M555.3 285.8L565.3 275.4L553.1 264.9L544.4 274.1Z" fill="url(#pg16)" /><path d="M565.3 275.4L553.1 264.9" stroke="#1a1a1a" stroke-width="0.9" fill="none"/><linearGradient id="pg17" gradientUnits="userSpaceOnUse" x1="526.6" y1="299.5" x2="538.8" y2="291.7"><stop offset="0" stop-color="#8c8c8c"/><stop offset="0.3" stop-color="#adadad"/><stop offset="0.72" stop-color="#787878"/><stop offset="1" stop-color="#404040"/></linearGradient><circle cx="524.5" cy="282.7" r="6.3" fill="url(#pg17)"/><path d="M526.6 299.5L538.8 291.7L529.8 279.3L519.1 286.1Z" fill="url(#pg17)" /><path d="M538.8 291.7L529.8 279.3" stroke="#1a1a1a" stroke-width="0.9" fill="none"/></g><path d="M507.0 295.0L532.7 295.6L560.3 280.6L576.0 263.0Z" fill="#a6a6a6" /><path d="M507.0 295.0L532.7 295.6L560.3 280.6L576.0 263.0" fill="none" stroke="#000" stroke-width="1"/><path d="M576.0 263.5L645.0 306.0L621.0 290.5L597.0 275.5Z" fill="#060606" /><path d="M576.0 263.0L645.0 306.0L646.0 384.0L588.0 426.0L503.0 390.0L507.0 295.0" fill="none" stroke="#000" stroke-width="1.2"/><circle cx="624.4" cy="390.5" r="7.2" fill="url(#cap)" stroke="#000" stroke-width="1.25"/><circle cx="599.3" cy="406.4" r="7.2" fill="url(#cap)" stroke="#000" stroke-width="1.25"/><circle cx="638.4" cy="362.4" r="7.2" fill="url(#cap)" stroke="#000" stroke-width="1.25"/><circle cx="564.6" cy="408.0" r="7.2" fill="url(#cap)" stroke="#000" stroke-width="1.25"/><circle cx="638.0" cy="330.7" r="7.2" fill="url(#cap)" stroke="#000" stroke-width="1.25"/><circle cx="527.0" cy="392.0" r="7.2" fill="url(#cap)" stroke="#000" stroke-width="1.25"/><circle cx="586.8" cy="353.8" r="7.2" fill="url(#cap)" stroke="#000" stroke-width="1.25"/><circle cx="569.0" cy="357.3" r="7.2" fill="url(#cap)" stroke="#000" stroke-width="1.25"/><circle cx="623.0" cy="297.0" r="7.2" fill="url(#cap)" stroke="#000" stroke-width="1.25"/><circle cx="588.8" cy="334.0" r="7.2" fill="url(#cap)" stroke="#000" stroke-width="1.25"/><circle cx="555.9" cy="346.0" r="7.2" fill="url(#cap)" stroke="#000" stroke-width="1.25"/><circle cx="511.3" cy="359.5" r="7.2" fill="url(#cap)" stroke="#000" stroke-width="1.25"/><circle cx="573.4" cy="322.5" r="7.2" fill="url(#cap)" stroke="#000" stroke-width="1.25"/><circle cx="556.2" cy="327.0" r="7.2" fill="url(#cap)" stroke="#000" stroke-width="1.25"/><circle cx="594.0" cy="282.0" r="7.2" fill="url(#cap)" stroke="#000" stroke-width="1.25"/><circle cx="513.2" cy="323.2" r="7.2" fill="url(#cap)" stroke="#000" stroke-width="1.25"/><circle cx="560.3" cy="280.6" r="7.2" fill="url(#cap)" stroke="#000" stroke-width="1.25"/><circle cx="532.7" cy="295.6" r="7.2" fill="url(#cap)" stroke="#000" stroke-width="1.25"/><circle cx="572.5" cy="344.0" r="84.0" fill="none" stroke="#000" stroke-width="1.3"/></g>
<g fill="none" stroke="#5c5c5c" stroke-width="1"><path d="M37.5 532.5V502.5M37.5 532.5H8.5" shape-rendering="crispEdges"/><path d="M37.5 532.5L34.3 527.4" shape-rendering="auto"/></g>
<rect x="0.5" y="0.5" width="1101" height="568" stroke="#96a0b4" stroke-width="1" fill="none"/>
</svg>
<div class="a" style="left:65px;top:154px;width:87px;height:19px;background:#8ea8c6"></div>
<div class="a" style="left:141px;top:157px;width:1px;height:15px;background:#000"></div>
<svg class="a" style="left:144px;top:162px" width="7" height="4"><path d="M0 0H7L3.5 4Z" fill="#000"/></svg>
<div class="a" style="left:3px;top:157px;width:55px;height:1px;background:#b9bdca"></div><div class="a" style="left:3px;top:159px;width:55px;height:1px;background:#b9bdca"></div>
<svg class="a" style="left:0;top:160px" width="64" height="520" viewBox="0 160 64 520"><defs><linearGradient id="lb" x1="0" y1="0" x2="1" y2="1"><stop offset="0" stop-color="#9fb0ff"/><stop offset="1" stop-color="#4f63d8"/></linearGradient><radialGradient id="ls" cx="0.35" cy="0.3" r="0.8"><stop offset="0" stop-color="#b4c0ff"/><stop offset="0.6" stop-color="#5a6fe0"/><stop offset="1" stop-color="#26349a"/></radialGradient><linearGradient id="lo" x1="0" y1="0" x2="1" y2="1"><stop offset="0" stop-color="#ffd24a"/><stop offset="1" stop-color="#f08200"/></linearGradient><linearGradient id="lg" x1="0" y1="0" x2="1" y2="1"><stop offset="0" stop-color="#f2f2f2"/><stop offset="1" stop-color="#8c8c8c"/></linearGradient></defs><g transform="translate(4.0,164.5)"><path d="M6.5 4V15.8L9.3 13.2L11.5 17.8L13.3 17L11.2 12.6L15 12.4Z" fill="#fff" stroke="#000" stroke-width="1" stroke-linejoin="round"/></g><g transform="translate(32.0,164.5)"><circle cx="10.2" cy="11.2" r="2.0" fill="#fff" stroke="#000" stroke-width="0.9"/><path d="M24 18.1V24H18.1Z" fill="#6e6e6e"/></g><g transform="translate(4.0,192.5)"><path d="M3.3 19L8.5 5.5L18.6 16" fill="none" stroke="#222" stroke-width="0.9"/><circle cx="3.3" cy="19.0" r="1.4" fill="#fff" stroke="#000" stroke-width="0.9"/><circle cx="8.5" cy="5.5" r="1.4" fill="#fff" stroke="#000" stroke-width="0.9"/><circle cx="18.6" cy="16.0" r="1.4" fill="#fff" stroke="#000" stroke-width="0.9"/><path d="M24 18.1V24H18.1Z" fill="#6e6e6e"/></g><g transform="translate(32.0,192.5)"><path d="M3 5.3C9 3.4 16.5 3.6 17.6 10.3C18.4 16.5 10 18 3 17.5" fill="none" stroke="#222" stroke-width="1"/><rect x="1.2" y="3.6" width="3.4" height="3.4" fill="#fff" stroke="#000" stroke-width="1.1"/><rect x="15.3" y="0.6" width="3.4" height="3.4" fill="#fff" stroke="#000" stroke-width="1.1"/><rect x="1.2" y="15.8" width="3.4" height="3.4" fill="#fff" stroke="#000" stroke-width="1.1"/><rect x="17.3" y="17.6" width="3.4" height="3.4" fill="#fff" stroke="#000" stroke-width="1.1"/><path d="M24 18.1V24H18.1Z" fill="#6e6e6e"/></g><g transform="translate(4.0,220.5)"><circle cx="10.9" cy="10.9" r="9.6" fill="none" stroke="#333" stroke-width="0.9"/><path d="M10.9 10.9L17.4 4.9" stroke="#000" stroke-width="1.1"/><circle cx="10.9" cy="10.9" r="1.4" fill="#fff" stroke="#000" stroke-width="0.9"/><circle cx="17.4" cy="4.9" r="1.4" fill="#fff" stroke="#000" stroke-width="0.9"/><path d="M24 18.1V24H18.1Z" fill="#6e6e6e"/></g><g transform="translate(32.0,220.5)"><ellipse cx="10.8" cy="11.2" rx="9.6" ry="6.6" fill="none" stroke="#333" stroke-width="0.9"/><path d="M10.8 4.3V11.2H20" fill="none" stroke="#444" stroke-width="0.8"/><rect x="9.1" y="2.6" width="3.4" height="3.4" fill="#fff" stroke="#000" stroke-width="1.1"/><rect x="9.1" y="9.5" width="3.4" height="3.4" fill="#fff" stroke="#000" stroke-width="1.1"/><rect x="18.3" y="9.5" width="3.4" height="3.4" fill="#fff" stroke="#000" stroke-width="1.1"/><path d="M24 18.1V24H18.1Z" fill="#6e6e6e"/></g><g transform="translate(4.0,248.5)"><path d="M4.3 3.1Q15 4 19.5 11.7" fill="none" stroke="#111" stroke-width="1.1"/><path d="M19.5 11.7L4.3 20V3.1" fill="none" stroke="#444" stroke-width="0.8"/><circle cx="4.3" cy="3.1" r="1.4" fill="#fff" stroke="#000" stroke-width="0.9"/><circle cx="4.3" cy="20.0" r="1.4" fill="#fff" stroke="#000" stroke-width="0.9"/><circle cx="19.5" cy="11.7" r="1.4" fill="#fff" stroke="#000" stroke-width="0.9"/><path d="M24 18.1V24H18.1Z" fill="#6e6e6e"/></g><g transform="translate(32.0,248.5)"><rect x="2.5" y="6.3" width="16.9" height="10.9" fill="none" stroke="#111" stroke-width="1.1"/><circle cx="19.4" cy="6.3" r="1.4" fill="#fff" stroke="#000" stroke-width="0.9"/><circle cx="2.5" cy="17.2" r="1.4" fill="#fff" stroke="#000" stroke-width="0.9"/><path d="M24 18.1V24H18.1Z" fill="#6e6e6e"/></g><g transform="translate(4.0,276.5)"><path d="M19 10.7L14.85 17.9H6.55L2.4 10.7L6.55 3.5H14.85Z" fill="none" stroke="#333" stroke-width="0.9"/><path d="M10.7 10.7H19" stroke="#000" stroke-width="1"/><circle cx="10.7" cy="10.7" r="1.4" fill="#fff" stroke="#000" stroke-width="0.9"/><circle cx="19.0" cy="10.7" r="1.4" fill="#fff" stroke="#000" stroke-width="0.9"/><path d="M24 18.1V24H18.1Z" fill="#6e6e6e"/></g><g transform="translate(32.0,276.5)"><path d="M9 4.5H18.8V14" fill="none" stroke="#999" stroke-width="0.8"/><path d="M3.5 4.5H9Q18.8 4.5 18.8 14V18.5" fill="none" stroke="#000" stroke-width="1.8"/><rect x="1.2" y="2.8" width="3.4" height="3.4" fill="#fff" stroke="#000" stroke-width="1.1"/><rect x="17.1" y="17.8" width="3.4" height="3.4" fill="#fff" stroke="#000" stroke-width="1.1"/><path d="M24 18.1V24H18.1Z" fill="#6e6e6e"/></g><g transform="translate(4.0,304.5)"><path d="M6.8 3.4H19.3L14 19.7L3 14.4Z" fill="url(#lb)" stroke="#223" stroke-width="0.8"/><path d="M13 3.4L8.6 17.1M5.3 8L17.4 9.2" stroke="#2a3a9a" stroke-width="0.8" fill="none"/><rect x="5.1" y="1.7" width="3.4" height="3.4" fill="#fff" stroke="#000" stroke-width="1.1"/><rect x="17.6" y="1.7" width="3.4" height="3.4" fill="#fff" stroke="#000" stroke-width="1.1"/><rect x="1.3" y="12.7" width="3.4" height="3.4" fill="#fff" stroke="#000" stroke-width="1.1"/><rect x="12.3" y="18.0" width="3.4" height="3.4" fill="#fff" stroke="#000" stroke-width="1.1"/><path d="M24 18.1V24H18.1Z" fill="#6e6e6e"/></g><g transform="translate(32.0,304.5)"><path d="M2.9 6.5L9.6 2.2L13.9 4.4L8.4 9.3Z" fill="#fff" stroke="#333" stroke-width="0.8"/><path d="M8.4 9.3L13.9 4.4Q19.4 6 19.4 11.7L12.7 14.2Q12.5 10.5 8.4 9.3Z" fill="url(#lb)" stroke="#223" stroke-width="0.8"/><path d="M12.7 14.2L19.4 11.7V16L12.7 20.3Z" fill="#fff" stroke="#333" stroke-width="0.8"/><path d="M24 18.1V24H18.1Z" fill="#6e6e6e"/></g><g transform="translate(4.0,332.5)"><path d="M10.7 3.1L18.6 6.5L10.4 12L2.4 8.4Z" fill="#a9b5ff"/><path d="M2.4 8.4L10.4 12V20.6L2.4 17.5Z" fill="#7388f2"/><path d="M10.4 12L18.6 6.5V16.3L10.4 20.6Z" fill="#2f3fb0"/><path d="M10.7 3.1L18.6 6.5V16.3L10.4 20.6L2.4 17.5V8.4Z" fill="none" stroke="#111" stroke-width="1" stroke-linejoin="round"/><path d="M24 18.1V24H18.1Z" fill="#6e6e6e"/></g><g transform="translate(32.0,332.5)"><circle cx="14.5" cy="7.5" r="6.7" fill="url(#ls)" stroke="#111" stroke-width="1"/><path d="M8.2 6.5Q14.5 10.5 21 6.5M15.5 0.9Q11.5 7.5 15 14.1" fill="none" stroke="#1a2470" stroke-width="0.8"/><circle cx="7.4" cy="14.8" r="6.9" fill="url(#ls)" stroke="#111" stroke-width="1"/><path d="M0.8 13.5Q7.4 17.8 14 13.5M8.5 8Q4.5 14.8 8 21.6" fill="none" stroke="#1a2470" stroke-width="0.8"/><path d="M24 18.1V24H18.1Z" fill="#6e6e6e"/></g><g transform="translate(4.0,360.5)"><ellipse cx="10.9" cy="3.6" rx="5.6" ry="2.7" fill="none" stroke="#111" stroke-width="0.9"/><path d="M0.4 9.1Q10.9 13.8 21.7 9.1V17.6Q10.9 25.2 0.4 17.6Z" fill="url(#lb)" stroke="#111" stroke-width="1"/><ellipse cx="10.9" cy="17" rx="5.3" ry="2.6" fill="#8e9cf5" stroke="#fff" stroke-width="1.6"/><path d="M24 18.1V24H18.1Z" fill="#6e6e6e"/></g><g transform="translate(32.0,360.5)"><path d="M9.6 2.4Q15 6.5 21.2 6.7Q17.5 13 12 20.7Q6.5 16.5 0.4 16.5Q6.5 10 9.6 2.4Z" fill="url(#lb)" stroke="#223" stroke-width="0.8"/><path d="M5.3 10.2Q11 12.5 17 13.3M13.6 4.6Q10 11 5.6 17.3M17.6 6Q13.5 12 9.3 19" fill="none" stroke="#2a3a9a" stroke-width="0.7"/><path d="M24 18.1V24H18.1Z" fill="#6e6e6e"/></g><g transform="translate(4.0,388.5)"><g transform="translate(-2.6,-2.2) scale(1.22)"><path d="M3.2 5.6L5.6 3.3L7.2 4.6Q8.2 2 9.8 3.2L9.2 5.4L11.6 4.6L12.8 7.8L10.6 8.6Q12.2 10.6 10 11.2L8.6 9.4L8.4 12.2L5 12L5.2 9.6Q2.6 10.8 2.2 8.6L4.4 7.6Z" fill="#f7a800" stroke="#111" stroke-width="1" stroke-linejoin="round"/><path d="M10.4 13.2L12.8 10.9L14.4 12.2Q15.4 9.6 17 10.8L16.4 13L18.8 12.2L20 15.4L17.8 16.2Q19.4 18.2 17.2 18.8L15.8 17L15.6 19.8L12.2 19.6L12.4 17.2Q9.8 18.4 9.4 16.2L11.6 15.2Z" fill="#fff" stroke="#111" stroke-width="1" stroke-linejoin="round"/></g></g><g transform="translate(32.0,388.5)"><path d="M-0.5 23.5L3 4.5L4.8 14L16.5 3.5L10.5 17.5L20.5 19.5L11 23Z" fill="url(#lo)" stroke="#111" stroke-width="0.9" stroke-linejoin="round"/></g><g transform="translate(4.0,416.5)"><path d="M10 1.6H16.8L11.3 13.9L10 12Z" fill="#1c2f8a"/><rect x="0.4" y="10.2" width="9.6" height="4.9" fill="#fff" stroke="#111" stroke-width="1"/><path d="M11.6 12.6L19.8 18.2L16.4 21.6L10.6 15.6Z" fill="#fff" stroke="#111" stroke-width="0.9"/></g><g transform="translate(32.0,416.5)"><rect x="1.3" y="10.8" width="18.7" height="5.2" fill="#fff" stroke="#111" stroke-width="1"/><path d="M10.8 2.8H18L11.5 16H10.8Z" fill="#1c2f8a"/></g><g transform="translate(4.0,444.5)"><path d="M10.9 3.2A4.7 4.7 0 0 1 15.4 9.1A4.7 4.7 0 0 1 14.4 18.4A4.7 4.7 0 0 1 11.1 17.2A4.7 4.7 0 0 1 7.9 18.4A4.7 4.7 0 0 1 6.4 9.1A4.7 4.7 0 0 1 10.9 3.2Z" fill="#000"/><circle cx="10.9" cy="7.9" r="3.3" fill="#9b9cf5"/><circle cx="7.9" cy="13.8" r="3.1" fill="#fff"/><circle cx="14.4" cy="13.8" r="3.1" fill="#1c2080"/><path d="M24 18.1V24H18.1Z" fill="#6e6e6e"/></g><g transform="translate(32.0,444.5)"><circle cx="10.8" cy="7.3" r="3.6" fill="#9b9cf5" stroke="#666" stroke-width="0.7"/><circle cx="5.9" cy="15.5" r="3.6" fill="#fff" stroke="#555" stroke-width="0.8"/><circle cx="16.1" cy="15.5" r="3.6" fill="#1c2080" stroke="#334" stroke-width="0.6"/></g><g transform="translate(4.0,472.5)"><path d="M0.9 6.8Q5 5.6 8 7Q15 10.5 15.6 21" fill="none" stroke="#000" stroke-width="1.6"/><rect x="4.6" y="4.9" width="3.2" height="3.2" fill="#fff" stroke="#000" stroke-width="1.1"/><rect x="14.4" y="15.0" width="3.2" height="3.2" fill="#fff" stroke="#000" stroke-width="1.1"/></g><g transform="translate(32.0,472.5)"><path d="M0 2.9H7.8L20 14.4V21" fill="none" stroke="#000" stroke-width="1.1" stroke-dasharray="1.2 1.2"/><path d="M0.4 6.8Q6 5.6 10.4 9Q15.6 13.5 15.7 21.5" fill="none" stroke="#000" stroke-width="2"/><rect x="6.2" y="1.3" width="3.2" height="3.2" fill="#fff" stroke="#000" stroke-width="1.1"/><rect x="18.4" y="12.8" width="3.2" height="3.2" fill="#fff" stroke="#000" stroke-width="1.1"/><path d="M24 18.1V24H18.1Z" fill="#6e6e6e"/></g><g transform="translate(4.0,500.5)"><g transform="translate(0,-2.4) skewY(11)" font-family="'Liberation Serif',serif" font-weight="700" font-size="25" text-anchor="middle"><text x="11.2" y="21" fill="#1c2a8a" stroke="#111a5a" stroke-width="1">T</text><text x="10.2" y="20.2" fill="#7388f2" stroke="#16237a" stroke-width="0.8">T</text></g></g><g transform="translate(32.0,500.5)"><path d="M8 14.3L13.6 8.6M10.6 8.4L14 8.2L13.8 11.6" fill="none" stroke="#111" stroke-width="1"/><rect x="2.6" y="13.9" width="5.8" height="6.1" fill="#f4f4f4" stroke="#111" stroke-width="1"/><rect x="14.5" y="1.9" width="6.1" height="5.8" fill="#7388f2" stroke="#111" stroke-width="1"/><path d="M24 18.1V24H18.1Z" fill="#6e6e6e"/></g><g transform="translate(4.0,528.5)"><rect x="2.4" y="2.1" width="6" height="6" fill="#7388f2" stroke="#111"/><rect x="15" y="5.4" width="5.5" height="5.5" fill="#7388f2" stroke="#111"/><rect x="10.7" y="8.5" width="5.6" height="5.6" fill="#7388f2" stroke="#111"/><rect x="2.4" y="14" width="6" height="6" fill="#f4f4f4" stroke="#111"/><rect x="14.6" y="16.2" width="6" height="6" fill="#7388f2" stroke="#111"/></g><g transform="translate(32.0,528.5)"><rect x="0.4" y="3.2" width="4.9" height="13.6" fill="#fff" stroke="#111" stroke-width="1"/><path d="M17 8.5L20.9 11.5L11.5 20.7L7.8 17.5Z" fill="#7388f2" stroke="#111" stroke-width="1"/><path d="M5.6 6.6Q11.5 5.5 13.6 9.6M10.8 9.6H14V6.6" fill="none" stroke="#111" stroke-width="0.9"/></g><g transform="translate(4.0,556.5)"><path d="M11.3 1.3L20.5 6.6L11 12L1.5 6.6Z" fill="#a9b5ff"/><path d="M1.5 6.6L11 12V21.5L1.5 17.2Z" fill="#7388f2"/><path d="M11 12L20.5 6.6V17.2L11 21.5Z" fill="#3243b8"/><path d="M11.3 1.3L20.5 6.6V17.2L10.7 21.5L1.5 17.2V6.6Z" fill="none" stroke="#111" stroke-width="1" stroke-linejoin="round"/><path d="M7.6 14.6L12 16.5L15.6 14.2V19.4L11.6 21.4L7.6 19.6Z" fill="#fff" stroke="#111" stroke-width="0.8"/><path d="M12 16.5V21.2" stroke="#888" stroke-width="0.8"/><path d="M24 18.1V24H18.1Z" fill="#6e6e6e"/></g><g transform="translate(32.0,556.5)"><path d="M1 19.7L4.7 15.4H21.2L17.6 19.7Z" fill="#7388f2" stroke="#111" stroke-width="0.9"/><path d="M4.7 17.5V7M10.8 17.5V7M17 17.5V7" stroke="#fff" stroke-width="1.8"/><path d="M2.2 8.6L4.7 4.6L7.2 8.6ZM8.3 8.6L10.8 4.6L13.3 8.6ZM14.5 8.6L17 4.6L19.5 8.6Z" fill="#fff"/><path d="M24 18.1V24H18.1Z" fill="#6e6e6e"/></g><g transform="translate(4.0,584.5)"><rect x="1.5" y="2.2" width="4.3" height="4.3" fill="#6f8cf0" stroke="#000" stroke-width="1.2"/><rect x="8.2" y="2.2" width="4.3" height="4.3" fill="#6f8cf0" stroke="#000" stroke-width="1.2"/><rect x="15.6" y="2.2" width="4.3" height="4.3" fill="#6f8cf0" stroke="#000" stroke-width="1.2"/><rect x="1.5" y="9.0" width="4.3" height="4.3" fill="#6f8cf0" stroke="#000" stroke-width="1.2"/><rect x="8.2" y="9.0" width="4.3" height="4.3" fill="#6f8cf0" stroke="#000" stroke-width="1.2"/><rect x="15.6" y="9.0" width="4.3" height="4.3" fill="#6f8cf0" stroke="#000" stroke-width="1.2"/><rect x="1.5" y="15.7" width="4.3" height="4.3" fill="#fff" stroke="#000" stroke-width="1.2"/><rect x="8.2" y="15.7" width="4.3" height="4.3" fill="#6f8cf0" stroke="#000" stroke-width="1.2"/><rect x="15.6" y="15.7" width="4.3" height="4.3" fill="#6f8cf0" stroke="#000" stroke-width="1.2"/><path d="M24 18.1V24H18.1Z" fill="#6e6e6e"/></g><g transform="translate(32.0,584.5)"><rect x="6.6" y="2.2" width="8.9" height="4.6" fill="#fff" stroke="#000" stroke-width="1.2"/><rect x="9" y="9" width="4.5" height="3.6" fill="#fff" stroke="#000" stroke-width="1.2"/><rect x="7.4" y="15.1" width="7.1" height="5.9" fill="#fff" stroke="#000" stroke-width="1.2"/><path d="M10.9 0.5V22" stroke="#e01010" stroke-width="1.3"/><path d="M24 18.1V24H18.1Z" fill="#6e6e6e"/></g><g transform="translate(4.0,612.5)"><path d="M8.9 3.2L12.4 2.4L12.9 6L9.5 8Z" fill="#fff" stroke="#111" stroke-width="0.8"/><path d="M1.5 4.8L5.8 3L8.9 3.8L8.2 18.3L1.9 16.5Z" fill="url(#lg)" stroke="#111" stroke-width="0.9" stroke-linejoin="round"/><path d="M12.5 4.2L19.3 6.1L14.4 20.7L7 18.9Z" fill="url(#lb)" stroke="#111" stroke-width="0.9" stroke-linejoin="round"/><path d="M16.6 5.4L19.3 6.1L14.4 20.7L12 20.1Z" fill="#3243b8"/><path d="M24 18.1V24H18.1Z" fill="#6e6e6e"/></g><g transform="translate(32.0,612.5)"><path d="M1.7 13.4L4.7 11.3L7.9 15.2Q13 6.5 19.6 2.2Q13 9.5 8.6 21.2Q5 16.5 1.7 13.4Z" fill="#000"/><path d="M24 18.1V24H18.1Z" fill="#6e6e6e"/></g><g transform="translate(4.0,640.5)"><path d="M1.5 8L7 3.8L13.1 6.2L8.2 16.6L2.1 13.6Z" fill="url(#lg)" stroke="#111" stroke-width="0.9" stroke-linejoin="round"/><path d="M1.5 8L7.6 10.2L13.1 6.2M7.6 10.2L8.2 16.6" fill="none" stroke="#333" stroke-width="0.7"/><path d="M16.2 5.6L20.6 16Q20.6 18.5 15.6 18.5Q10.6 18.5 10.6 16Z" fill="url(#lg)" stroke="#111" stroke-width="0.9" stroke-linejoin="round"/><path d="M24 18.1V24H18.1Z" fill="#6e6e6e"/></g><g transform="translate(32.0,640.5)"><path d="M10.8 8.7L18.8 16.4L10.8 21.3L2.9 17.2Z" fill="#f5b040" stroke="#111" stroke-width="0.9" stroke-linejoin="round"/><path d="M10.8 8.7L10.8 21.3L2.9 17.2Z" fill="#ffd27a"/><path d="M10.8 8.7L18.8 16.4L10.8 21.3L2.9 17.2Z" fill="none" stroke="#111" stroke-width="0.9" stroke-linejoin="round"/><path d="M8.4 4.6L12.5 0.6L20 1L20.3 4.4L14.5 5.2L11 6.2Z" fill="#f2f2f2" stroke="#555" stroke-width="0.7"/><path d="M9 4.4L12.2 1.4M10.4 5L13.6 2M12 5.2L15 2.4" stroke="#666" stroke-width="0.7"/><rect x="20" y="0" width="3" height="5.6" fill="#111"/><path d="M24 18.1V24H18.1Z" fill="#6e6e6e"/></g></svg>
<svg class="a" style="left:0;top:116px" width="920" height="32" viewBox="0 116 920 32"><defs><linearGradient id="tpg" x1="0" y1="0" x2="1" y2="1"><stop offset="0" stop-color="#ffffff"/><stop offset="1" stop-color="#d4d4d4"/></linearGradient><linearGradient id="tfo" x1="0" y1="0" x2="0" y2="1"><stop offset="0" stop-color="#ffe680"/><stop offset="1" stop-color="#f2b311"/></linearGradient><linearGradient id="tsv" x1="0" y1="0" x2="1" y2="0"><stop offset="0" stop-color="#b9a750"/><stop offset="0.5" stop-color="#d8ca7c"/><stop offset="1" stop-color="#a8963c"/></linearGradient><linearGradient id="tyl" x1="0" y1="0" x2="1" y2="0"><stop offset="0" stop-color="#fff6a8"/><stop offset="1" stop-color="#f5e36a"/></linearGradient><radialGradient id="tgs" cx="0.38" cy="0.3" r="0.75"><stop offset="0" stop-color="#ffffff"/><stop offset="0.45" stop-color="#c4c4c4"/><stop offset="1" stop-color="#4a4a4a"/></radialGradient><radialGradient id="tbs" cx="0.35" cy="0.3" r="0.8"><stop offset="0" stop-color="#7fa8ff"/><stop offset="0.4" stop-color="#1f4fd0"/><stop offset="1" stop-color="#061a66"/></radialGradient><radialGradient id="thl" cx="0.4" cy="0.3" r="0.8"><stop offset="0" stop-color="#7f9cf5"/><stop offset="0.6" stop-color="#3a5bd8"/><stop offset="1" stop-color="#1c2f9a"/></radialGradient><linearGradient id="tco" x1="0" y1="0" x2="1" y2="1"><stop offset="0" stop-color="#ffe27a"/><stop offset="1" stop-color="#ef7600"/></linearGradient><radialGradient id="tbu" cx="0.4" cy="0.35" r="0.7"><stop offset="0" stop-color="#f2f2f2"/><stop offset="1" stop-color="#8e8e8e"/></radialGradient><linearGradient id="tlk" x1="0" y1="0" x2="1" y2="0"><stop offset="0" stop-color="#e6e6e6"/><stop offset="1" stop-color="#8c8c8c"/></linearGradient><pattern id="tdots" width="2.4" height="2.4" patternUnits="userSpaceOnUse"><rect width="1.3" height="1.3" fill="#c9cbd2"/></pattern></defs><g transform="translate(10.0,119.5)"><path d="M3.2 2H13.7L17.9 6.2V21H3.2Z" fill="url(#tpg)" stroke="#000" stroke-width="1.1" stroke-linejoin="round"/><path d="M13.7 2V6.2H17.9" fill="#fff" stroke="#000" stroke-width="0.8"/></g><g transform="translate(38.0,119.5)"><path d="M1 19.3V6Q1 4.8 2.4 4.8H7.8L9.6 7H16.4V10.5H5.4Z" fill="#f7d860" stroke="#000" stroke-width="1" stroke-linejoin="round"/><path d="M1 19.5L4.8 10.3H21.2L16.6 19.5Z" fill="url(#tfo)" stroke="#000" stroke-width="1" stroke-linejoin="round"/></g><g transform="translate(66.0,119.5)"><path d="M0.8 1.5H20.8V21.5H3L0.8 19.5Z" fill="url(#tsv)" stroke="#000" stroke-width="1.1" stroke-linejoin="round"/><rect x="4.2" y="2.2" width="13" height="9.2" fill="#f1f1f1" stroke="#6b5f20" stroke-width="0.6"/><path d="M4.4 8.6H17" stroke="#cfcfcf"/><rect x="5.4" y="14.4" width="11" height="7" fill="#b9bcc2" stroke="#4a4a4a" stroke-width="0.7"/><rect x="7" y="15.6" width="3" height="4.6" fill="#8a7a30"/><path d="M24 18.1V24H18.1Z" fill="#6e6e6e"/></g><g transform="translate(94.0,119.5)"><path d="M5.4 11L8 1.6H18L16.4 11Z" fill="#fff" stroke="#000" stroke-width="1" stroke-linejoin="round"/><rect x="10.4" y="4.6" width="3.6" height="3.4" fill="#9a9a9a"/><path d="M0.7 13.4Q0.7 11 3 11H18.6Q20.8 11 20.8 13.4V19.4H0.7Z" fill="#e8e8e8" stroke="#000" stroke-width="1" stroke-linejoin="round"/><path d="M16.4 11L20.8 8.4V17L16.4 19.4" fill="#4a4a4a" stroke="#000" stroke-width="0.9"/><path d="M1 15.4H16.4M1 17.4H16.4" stroke="#000" stroke-width="1"/><path d="M2.4 19.4V21.4H17.2L19.6 19.4" fill="#cfcfcf" stroke="#000" stroke-width="0.9"/></g><g transform="translate(122.0,119.5)"><path d="M2.7 3H14.4V17L10.6 21.4H2.7Z" fill="url(#tpg)" stroke="#000" stroke-width="1.1" stroke-linejoin="round"/><path d="M14.4 17H11.4Q10.6 17 10.6 18V21.4" fill="#fff" stroke="#000" stroke-width="0.8"/><path d="M8.4 5.4L12.4 0.6L19.6 0.4L20 4.4L14.4 5.2L10.6 6.6Z" fill="#ececec" stroke="#555" stroke-width="0.7"/><path d="M8.8 5L12 1.6M10.2 5.6L13.4 2.2M11.8 5.4L14.8 2.6" stroke="#666" stroke-width="0.7"/><rect x="20" y="-0.4" width="3.2" height="5.8" fill="#111"/></g><g transform="translate(150.0,119.5)"><path d="M5 2.7L13.2 16.2M16.8 2.7L8.6 16.2" stroke="#111" stroke-width="1" fill="none"/><ellipse cx="6.6" cy="18.2" rx="2.1" ry="3" transform="rotate(32 6.6 18.2)" fill="none" stroke="#7a84aa" stroke-width="0.8"/><ellipse cx="15.2" cy="18.2" rx="2.1" ry="3" transform="rotate(-32 15.2 18.2)" fill="none" stroke="#7a84aa" stroke-width="0.8"/></g><g transform="translate(178.0,119.5)"><path d="M3.8 1.5H10.6L13.8 4.7V15.8H3.8Z" fill="url(#tpg)" stroke="#000" stroke-width="1.1" stroke-linejoin="round"/><path d="M8.2 6.6H15.4L18.8 10V21.1H8.2Z" fill="url(#tpg)" stroke="#000" stroke-width="1.1" stroke-linejoin="round"/><path d="M15.4 6.6V10H18.8" fill="none" stroke="#000" stroke-width="0.8"/></g><g transform="translate(206.0,119.5)"><rect x="4" y="3" width="14.1" height="17.1" rx="2" fill="url(#tyl)" stroke="#000" stroke-width="1.1"/><path d="M7.6 3.4V2.4Q7.6 1.7 8.4 1.7H13.6Q14.4 1.7 14.4 2.4V3.4Q14.4 4.6 13.2 4.6H8.8Q7.6 4.6 7.6 3.4Z" fill="#d8d8d8" stroke="#000" stroke-width="0.9"/></g><g transform="translate(234.0,119.5)"><path d="M7 10.6Q13.5 5.4 20.6 12.6L18.2 14.6Q13 9.6 8.6 12.6Z" fill="#6a6a6a"/><path d="M7 10.6Q13.5 5.4 20.6 12.6" fill="none" stroke="#000" stroke-width="1.6"/><path d="M1.3 16.4L4.4 8.4L10.6 14.4Z" fill="#000"/><path d="M24 18.1V24H18.1Z" fill="#6e6e6e"/></g><g transform="translate(262.0,119.5)"><path d="M7.2 20.9L0.5 10.8Q-0.2 9.4 1.2 9.2Q2.2 9.2 3 10.2L5.9 13.6V4.6Q5.9 3.4 7 3.4Q8.2 3.4 8.2 4.6V2Q8.2 0.8 9.5 0.8Q10.8 0.8 10.8 2V2.6Q10.8 1.4 12.2 1.4Q13.8 1.4 13.8 2.6V4.9Q13.8 3.7 15.6 3.7Q17.6 3.7 17.6 5.2V13Q17.6 17 15.4 20.9" fill="url(#tpg)" stroke="#000" stroke-width="1.1" stroke-linejoin="round"/><path d="M8.2 4.6V10.2M10.8 2.6V10.2M13.8 4.9V10.6" stroke="#000" stroke-width="1"/></g><g transform="translate(290.0,119.5)"><ellipse cx="11" cy="11.1" rx="10.8" ry="3.3" fill="none" stroke="#666" stroke-width="0.7"/><ellipse cx="11" cy="11.5" rx="3.6" ry="10.8" fill="none" stroke="#666" stroke-width="0.7"/><path d="M14.5 9.5Q15.2 17 11.6 22.1" fill="none" stroke="#000" stroke-width="1.2"/><path d="M9 14.3Q16 14.8 21.5 12" fill="none" stroke="#000" stroke-width="1.2"/><path d="M14.1 5.8L12.5 10.2L16.2 9.8ZM6.2 14L9.8 12.3L9.8 15.8Z" fill="#000"/></g><g transform="translate(318.0,119.5)"><path d="M8.4 13.9L2.5 19.8" stroke="#000" stroke-width="2.1" stroke-linecap="butt"/><circle cx="13.3" cy="9.0" r="6.6" fill="#f4f5f8" stroke="#222" stroke-width="1.0"/><path d="M13.3 5V9.8M10.9 7.4H15.7M10.9 11.6H15.7" stroke="#000" stroke-width="1"/></g><g transform="translate(346.0,119.5)"><rect x="5.6" y="1.7" width="14.9" height="13.2" fill="none" stroke="#000" stroke-width="1.1" stroke-dasharray="2 1.5"/><path d="M4.5 16.7L0.6 20.4" stroke="#000" stroke-width="2.1" stroke-linecap="butt"/><circle cx="9.3" cy="12.1" r="6.3" fill="#f4f5f8" stroke="#222" stroke-width="1.0"/><path d="M6 14.6H8.4M9.8 14.6H12.2" stroke="#444" stroke-width="0.8"/></g><g transform="translate(374.0,119.5)"><path d="M7.4 15.0L2.4 20.1" stroke="#000" stroke-width="2.1" stroke-linecap="butt"/><circle cx="12.4" cy="9.9" r="6.8" fill="#f4f5f8" stroke="#222" stroke-width="1.0"/><path d="M0.8 1.7H5.8L0.8 6.7ZM21.1 1.7V6.7L16.1 1.7ZM0.8 20.8V16L5.6 20.8ZM21.1 20.8H16.3L21.1 16Z" fill="#000"/></g><g transform="translate(402.0,119.5)"><path d="M7.4 15.5L2.4 20.4" stroke="#000" stroke-width="2.1" stroke-linecap="butt"/><circle cx="12.8" cy="10.2" r="7.2" fill="#f4f5f8" stroke="#222" stroke-width="1.1"/><circle cx="12.8" cy="10.2" r="6" fill="none" stroke="#888" stroke-width="0.6"/><circle cx="14.9" cy="7.9" r="3.2" fill="#ffe81a" stroke="#b89a00" stroke-width="0.7"/><circle cx="11.8" cy="12.4" r="2.9" fill="#ffe81a" stroke="#b89a00" stroke-width="0.7"/></g><g transform="translate(430.0,119.5)"><path d="M8.3 17.8L4.3 21.4" stroke="#000" stroke-width="2.1" stroke-linecap="butt"/><circle cx="12.0" cy="14.5" r="4.7" fill="#f4f5f8" stroke="#222" stroke-width="1.0"/><path d="M6 7.4Q13 0.6 20.6 6.4L19 8.6Q13 4 7.6 9.4Z" fill="#555"/><path d="M6 7.4Q13 0.6 20.6 6.4" fill="none" stroke="#000" stroke-width="1.5"/><path d="M1.2 10.6L3.4 3.4L9.8 9.4Z" fill="#000"/><path d="M24 18.1V24H18.1Z" fill="#6e6e6e"/></g><g transform="translate(458.0,119.5)"><rect x="0.6" y="1.5" width="20.3" height="18.6" fill="#c2c2c2" stroke="#000" stroke-width="1.3"/><path d="M10.8 1.5V20.1M0.6 10.6H20.9" stroke="#000" stroke-width="1.3"/><rect x="11.6" y="2.2" width="4.4" height="1.2" fill="#1a2a9a"/><path d="M1.6 2.6H6M1.6 11.6H5" stroke="#888" stroke-width="0.6"/><path d="M24 18.1V24H18.1Z" fill="#6e6e6e"/></g><g transform="translate(486.0,119.5)"><path d="M-0.6 15.9H21.4" stroke="#999" stroke-width="0.8"/><path d="M0.6 13.4Q0.2 10.6 3 10.2L8 9.4L9.4 6.4Q9.8 5.8 10.6 5.8H15.6Q16.6 5.8 16.8 6.8L17.2 9.4L19.2 10Q20.4 10.6 20.2 13.4Z" fill="#e01818" stroke="#8a0000" stroke-width="0.6"/><path d="M10.2 6.8H12.4V9.2H9.2ZM13.4 6.8H15.8L16.2 9.2H13.4Z" fill="#fff"/><circle cx="5" cy="13.6" r="2" fill="#111"/><circle cx="15.6" cy="13.6" r="2" fill="#111"/><circle cx="5" cy="13.6" r="0.8" fill="#bbb"/><circle cx="15.6" cy="13.6" r="0.8" fill="#bbb"/><path d="M24 18.1V24H18.1Z" fill="#6e6e6e"/></g><g transform="translate(514.0,119.5)"><path d="M0.2 15.8L8.9 6.5L22 10.8L15.2 21.5Z" fill="#f2f2f2" stroke="#b8b8b8" stroke-width="0.7"/><path d="M3.1 12.7L17.6 17.8M6 9.6L19.8 14.3M13.2 7.9L5.2 17.7M17.6 9.4L10.2 19.6" stroke="#b8b8b8" stroke-width="0.7"/><path d="M11 13.2L14.5 8.4" stroke="#1a9a1a" stroke-width="1.3"/><path d="M12 13.6L18.9 15.8" stroke="#d01818" stroke-width="1.3"/><rect x="9" y="11.6" width="3.6" height="3.6" fill="#fff" stroke="#000" stroke-width="1.3"/><path d="M24 18.1V24H18.1Z" fill="#6e6e6e"/></g><g transform="translate(542.0,119.5)"><circle cx="10.8" cy="11.4" r="8.9" fill="none" stroke="#8a8a8a" stroke-width="1"/><path d="M10.8 11.4H20.8" stroke="#000" stroke-width="1.1"/><circle cx="10.8" cy="11.4" r="1.6" fill="#fff" stroke="#000" stroke-width="0.9"/><path d="M24 18.1V24H18.1Z" fill="#6e6e6e"/></g><g transform="translate(570.0,119.5)"><path d="M18.3 0.9H22V4.6M0.2 19V22H3.8" fill="none" stroke="#000" stroke-width="1.1"/><circle cx="7.3" cy="7.9" r="3.1" fill="#ffe81a" stroke="#c87800" stroke-width="0.8"/><rect x="12.3" y="7.1" width="6.6" height="5.8" fill="#ffe81a" stroke="#c87800" stroke-width="0.8"/><path d="M9.6 13.9L12.7 19.2H6.5Z" fill="none" stroke="#c8641e" stroke-width="0.9"/><path d="M24 18.1V24H18.1Z" fill="#6e6e6e"/></g><g transform="translate(598.0,119.5)"><path d="M10.8 1.3A7 7 0 0 1 17.8 8.3Q17.8 11 15.4 13.4Q14 15 14 17.4H7.6Q7.6 15 6.2 13.4Q3.8 11 3.8 8.3A7 7 0 0 1 10.8 1.3Z" fill="url(#tbu)" stroke="#5a5a5a" stroke-width="0.9"/><path d="M7.8 17.6H13.8V19.6Q13.8 20.8 12.6 20.8H9Q7.8 20.8 7.8 19.6Z" fill="#9a9a9a" stroke="#444" stroke-width="0.7"/><path d="M7.8 18.6H13.8" stroke="#555" stroke-width="0.6"/><path d="M24 18.1V24H18.1Z" fill="#6e6e6e"/></g><g transform="translate(626.0,119.5)"><path d="M7.5 9.5V7.1A3.6 3.8 0 0 1 14.7 7.1V9.5" fill="none" stroke="#000" stroke-width="2"/><rect x="5.2" y="9.5" width="11.8" height="9.4" rx="0.8" fill="url(#tlk)" stroke="#000" stroke-width="1.2"/><path d="M7 12.4H15.2M7 14.4H15.2M7 16.4H15.2" stroke="#8a8a8a" stroke-width="0.8"/><path d="M24 18.1V24H18.1Z" fill="#6e6e6e"/></g><g transform="translate(654.0,119.5)"><g transform="translate(2.2,2.7) scale(1.170)"><path d="M0.5 1 L14.5 4.5 L14.5 10.5 L5.5 15.5 L0.5 8 Z" fill="#1a2a8a" stroke="#111" stroke-width="1" stroke-linejoin="round"/><path d="M0.8 1.2 L14.2 4.7 L14.2 6.2 L5.6 10.6 L1 3.6 Z" fill="#ff5a14"/><path d="M1 3.6 L5.6 10.6 L14.2 6.2 L14.2 7.8 L5.6 12.3 L1 5.6 Z" fill="#e2321e"/><path d="M1 5.6 L5.6 12.3 L14.2 7.8 L14.2 9 L5.6 13.6 L1 7 Z" fill="#f4f4f4"/><path d="M1 7 L5.6 13.6 L14.2 9 L14.2 10.3 L5.6 15 L1 8 Z" fill="#2840b0"/><path d="M0.8 1.2 L14.2 4.7" stroke="#ff9a50" stroke-width="0.8"/></g><path d="M24 18.1V24H18.1Z" fill="#6e6e6e"/></g><g transform="translate(682.0,119.5)"><path d="M7.77 2.27A8.90 8.90 0 0 1 12.83 2.27L11.66 6.20A4.80 4.80 0 0 0 8.94 6.20Z" fill="#ff2020"/><path d="M12.38 2.15A8.90 8.90 0 0 1 16.76 4.67L13.78 7.50A4.80 4.80 0 0 0 11.42 6.13Z" fill="#ff8a00"/><path d="M16.43 4.34A8.90 8.90 0 0 1 18.95 8.72L14.97 9.68A4.80 4.80 0 0 0 13.60 7.32Z" fill="#ffe600"/><path d="M18.83 8.27A8.90 8.90 0 0 1 18.83 13.33L14.90 12.16A4.80 4.80 0 0 0 14.90 9.44Z" fill="#9be000"/><path d="M18.95 12.88A8.90 8.90 0 0 1 16.43 17.26L13.60 14.28A4.80 4.80 0 0 0 14.97 11.92Z" fill="#21c030"/><path d="M16.76 16.93A8.90 8.90 0 0 1 12.38 19.45L11.42 15.47A4.80 4.80 0 0 0 13.78 14.10Z" fill="#00c8a0"/><path d="M12.83 19.33A8.90 8.90 0 0 1 7.77 19.33L8.94 15.40A4.80 4.80 0 0 0 11.66 15.40Z" fill="#00b4e6"/><path d="M8.22 19.45A8.90 8.90 0 0 1 3.84 16.93L6.82 14.10A4.80 4.80 0 0 0 9.18 15.47Z" fill="#2060e0"/><path d="M4.17 17.26A8.90 8.90 0 0 1 1.65 12.88L5.63 11.92A4.80 4.80 0 0 0 7.00 14.28Z" fill="#5a2fd0"/><path d="M1.77 13.33A8.90 8.90 0 0 1 1.77 8.27L5.70 9.44A4.80 4.80 0 0 0 5.70 12.16Z" fill="#a020c0"/><path d="M1.65 8.72A8.90 8.90 0 0 1 4.17 4.34L7.00 7.32A4.80 4.80 0 0 0 5.63 9.68Z" fill="#e020a0"/><path d="M3.84 4.67A8.90 8.90 0 0 1 8.22 2.15L9.18 6.13A4.80 4.80 0 0 0 6.82 7.50Z" fill="#f02060"/><circle cx="10.30" cy="10.80" r="8.90" fill="none" stroke="#222" stroke-width="0.9"/><circle cx="10.30" cy="10.80" r="4.80" fill="#fff" stroke="#333" stroke-width="0.7"/><path d="M24 18.1V24H18.1Z" fill="#6e6e6e"/></g><g transform="translate(710.0,119.5)"><circle cx="10.9" cy="11.2" r="8.8" fill="url(#tgs)" stroke="#222" stroke-width="0.9"/><path d="M2.2 10.4Q10.9 14.6 19.6 10.4M12 2.5Q8 11.2 11.6 20" fill="none" stroke="#333" stroke-width="1"/></g><g transform="translate(738.0,119.5)"><rect x="-0.3" y="0" width="23" height="22.6" fill="url(#tdots)"/><circle cx="10.9" cy="11.2" r="8.8" fill="url(#tgs)" stroke="#222" stroke-width="0.9"/><path d="M2.2 10.4Q10.9 14.6 19.6 10.4M12 2.5Q8 11.2 11.6 20" fill="none" stroke="#333" stroke-width="1"/><path d="M24 18.1V24H18.1Z" fill="#6e6e6e"/></g><g transform="translate(766.0,119.5)"><ellipse cx="12" cy="19.6" rx="8.6" ry="2.4" fill="#9a9ca6" opacity="0.55"/><circle cx="10.9" cy="11.2" r="8.8" fill="url(#tbs)" stroke="#06123a" stroke-width="0.8"/><ellipse cx="7.6" cy="6.8" rx="2.6" ry="1.7" fill="#fff" opacity="0.85" transform="rotate(-30 7.6 6.8)"/><path d="M24 18.1V24H18.1Z" fill="#6e6e6e"/></g><g transform="translate(794.0,119.5)"><path d="M9 5L22.1 0.9L19 13.3Z" fill="url(#tco)" stroke="#7a4a00" stroke-width="0.7" stroke-linejoin="round"/><ellipse cx="14" cy="9.2" rx="2.2" ry="6.4" transform="rotate(-50 14 9.2)" fill="#fff3c4" stroke="#9a6a10" stroke-width="0.6"/><path d="M24 18.1V24H18.1Z" fill="#6e6e6e"/></g><g transform="translate(822.0,119.5)"><path d="M21.5 9.3L21.5 13.5L18.2 13.3L17.1 15.6L20.0 17.1L17.0 20.1L14.8 17.7L12.4 18.5L13.4 21.6L9.2 21.6L9.4 18.3L7.1 17.2L5.6 20.1L2.6 17.1L5.0 14.9L4.2 12.5L1.1 13.5L1.1 9.3L4.4 9.5L5.5 7.2L2.6 5.7L5.6 2.7L7.8 5.1L10.2 4.3L9.2 1.2L13.4 1.2L13.2 4.5L15.5 5.6L17.0 2.7L20.0 5.7L17.6 7.9L18.4 10.3Z" fill="#f6dc6a" stroke="#3a2a00" stroke-width="0.9" stroke-linejoin="round"/><circle cx="11.3" cy="11.4" r="4.6" fill="#e8a020" opacity="0.55"/><rect x="8.6" y="5.2" width="5.4" height="8.1" rx="1.6" fill="url(#tlk)" stroke="#333" stroke-width="0.8"/><rect x="9.4" y="9" width="3.8" height="3.6" fill="#7a7a7a"/><path d="M24 18.1V24H18.1Z" fill="#6e6e6e"/></g><g transform="translate(850.0,119.5)"><g fill="none" stroke="#000" stroke-width="1.1"><path d="M1 1.7H9M1 12.7H10M10.6 13.6V20.8M20.6 13.6V20.8M2.6 3.4V11M12.4 19.5H19"/></g><path d="M2.6 2.6L4.2 5H1ZM2.6 11.8L4.2 9.4H1ZM11.4 19.5L13.8 17.9V21.1ZM19.9 19.5L17.5 17.9V21.1Z" fill="#000"/><rect x="8.6" y="0.4" width="2.6" height="2.6" fill="#fff" stroke="#000" stroke-width="0.9"/><rect x="9.4" y="11.4" width="2.6" height="2.6" fill="#fff" stroke="#000" stroke-width="0.9"/><rect x="19.3" y="11.4" width="2.6" height="2.6" fill="#fff" stroke="#000" stroke-width="0.9"/><path d="M24 18.1V24H18.1Z" fill="#6e6e6e"/></g><g transform="translate(878.0,119.5)"><circle cx="11.4" cy="11.1" r="9.8" fill="url(#thl)"/><text x="11.4" y="17.6" text-anchor="middle" font-family="'Liberation Serif',serif" font-weight="700" font-size="18.5" fill="#fff">?</text><path d="M24 18.1V24H18.1Z" fill="#6e6e6e"/></g></svg>
<div class="a" style="left:1174px;top:157px;width:192px;height:1px;background:#b9bdca"></div><div class="a" style="left:1174px;top:159px;width:192px;height:1px;background:#b9bdca"></div>
<div class="a" style="left:1173px;top:183px;width:192px;height:563px;background:#f7f7fa;border:1px solid #a9aebb;border-top:none"></div>
<svg class="a" style="left:1170px;top:160px" width="196" height="26" viewBox="1170 160 196 26"><defs><linearGradient id="pt" x1="0" y1="0" x2="0" y2="1"><stop offset="0" stop-color="#e6e9f3"/><stop offset="1" stop-color="#d3d8e7"/></linearGradient><linearGradient id="pta" x1="0" y1="0" x2="0" y2="1"><stop offset="0" stop-color="#ffffff"/><stop offset="1" stop-color="#f7f7fa"/></linearGradient></defs><path d="M1225 183.5H1364.5" stroke="#a9aebb"/><path d="M1215.5 183.5V166.5Q1215.5 162.5 1219.5 162.5H1246.5L1266.5 183.5Z" fill="url(#pt)" stroke="#a9aebb"/><path d="M1257.5 183.5V166.5Q1257.5 162.5 1261.5 162.5H1288.0L1308.0 183.5Z" fill="url(#pt)" stroke="#a9aebb"/><path d="M1299.5 183.5V166.5Q1299.5 162.5 1303.5 162.5H1330.0L1350.0 183.5Z" fill="url(#pt)" stroke="#a9aebb"/><path d="M1173.5 185V166.5Q1173.5 162.5 1177.5 162.5H1203Q1205 162.5 1206 164L1225 183.5V185Z" fill="url(#pta)"/><path d="M1173.5 185V166.5Q1173.5 162.5 1177.5 162.5H1203Q1205 162.5 1206 164L1225 183.5" fill="none" stroke="#a9aebb"/><path d="M1183.63 166.07A6.60 6.60 0 0 1 1187.37 166.07L1186.52 168.95A3.60 3.60 0 0 0 1184.48 168.95Z" fill="#ff2020"/><path d="M1187.04 165.98A6.60 6.60 0 0 1 1190.29 167.86L1188.11 169.92A3.60 3.60 0 0 0 1186.34 168.90Z" fill="#ff8a00"/><path d="M1190.04 167.61A6.60 6.60 0 0 1 1191.92 170.86L1189.00 171.56A3.60 3.60 0 0 0 1187.98 169.79Z" fill="#ffe600"/><path d="M1191.83 170.53A6.60 6.60 0 0 1 1191.83 174.27L1188.95 173.42A3.60 3.60 0 0 0 1188.95 171.38Z" fill="#9be000"/><path d="M1191.92 173.94A6.60 6.60 0 0 1 1190.04 177.19L1187.98 175.01A3.60 3.60 0 0 0 1189.00 173.24Z" fill="#21c030"/><path d="M1190.29 176.94A6.60 6.60 0 0 1 1187.04 178.82L1186.34 175.90A3.60 3.60 0 0 0 1188.11 174.88Z" fill="#00c8a0"/><path d="M1187.37 178.73A6.60 6.60 0 0 1 1183.63 178.73L1184.48 175.85A3.60 3.60 0 0 0 1186.52 175.85Z" fill="#00b4e6"/><path d="M1183.96 178.82A6.60 6.60 0 0 1 1180.71 176.94L1182.89 174.88A3.60 3.60 0 0 0 1184.66 175.90Z" fill="#2060e0"/><path d="M1180.96 177.19A6.60 6.60 0 0 1 1179.08 173.94L1182.00 173.24A3.60 3.60 0 0 0 1183.02 175.01Z" fill="#5a2fd0"/><path d="M1179.17 174.27A6.60 6.60 0 0 1 1179.17 170.53L1182.05 171.38A3.60 3.60 0 0 0 1182.05 173.42Z" fill="#a020c0"/><path d="M1179.08 170.86A6.60 6.60 0 0 1 1180.96 167.61L1183.02 169.79A3.60 3.60 0 0 0 1182.00 171.56Z" fill="#e020a0"/><path d="M1180.71 167.86A6.60 6.60 0 0 1 1183.96 165.98L1184.66 168.90A3.60 3.60 0 0 0 1182.89 169.92Z" fill="#f02060"/><circle cx="1185.50" cy="172.40" r="6.60" fill="none" stroke="#222" stroke-width="0.9"/><circle cx="1185.50" cy="172.40" r="3.60" fill="#fff" stroke="#333" stroke-width="0.7"/><g transform="translate(1220.0,165.0) scale(1.000)"><path d="M0.5 1 L14.5 4.5 L14.5 10.5 L5.5 15.5 L0.5 8 Z" fill="#1a2a8a" stroke="#111" stroke-width="1" stroke-linejoin="round"/><path d="M0.8 1.2 L14.2 4.7 L14.2 6.2 L5.6 10.6 L1 3.6 Z" fill="#ff5a14"/><path d="M1 3.6 L5.6 10.6 L14.2 6.2 L14.2 7.8 L5.6 12.3 L1 5.6 Z" fill="#e2321e"/><path d="M1 5.6 L5.6 12.3 L14.2 7.8 L14.2 9 L5.6 13.6 L1 7 Z" fill="#f4f4f4"/><path d="M1 7 L5.6 13.6 L14.2 9 L14.2 10.3 L5.6 15 L1 8 Z" fill="#2840b0"/><path d="M0.8 1.2 L14.2 4.7" stroke="#ff9a50" stroke-width="0.8"/></g><rect x="1263" y="166" width="13.5" height="11" rx="1" fill="#222"/><rect x="1264.5" y="167.5" width="10.5" height="8" fill="#c9c9c9"/><path d="M1264.5 167.5h10.5v3l-10.5 3z" fill="#e6e6e6"/><path d="M1267 178h6l1 1.8h-8z" fill="#111"/><rect x="1304.5" y="165.5" width="14" height="14" fill="#3d6fd6" stroke="#555"/><rect x="1305" y="166" width="13" height="2.5" fill="#e9ecf5"/><circle cx="1311.5" cy="174" r="4.6" fill="#5b8df0" stroke="#1d3f9a" stroke-width="0.8"/></svg>
<div class="a" style="left:1177px;top:191px;width:182px;height:415px;background:#fff;border:1px solid #e2e3e8"></div>
<div class="a" style="left:1178px;top:191px;width:180px;height:23px;background:#f7f7fa;border-top:1px solid #e2e3e8;border-bottom:1px solid #e2e3e8"></div>
<div class="a" style="left:1178px;top:214px;width:8px;height:18px;background:#f1f1f4"></div>
<div class="a" style="left:1178px;top:232px;width:180px;height:1px;background:#e2e3e8"></div>
<div class="a" style="left:1268px;top:214px;width:1px;height:18px;background:#e2e3e8"></div>
<div class="a" style="left:1178px;top:233px;width:8px;height:18px;background:#f1f1f4"></div>
<div class="a" style="left:1178px;top:251px;width:180px;height:1px;background:#e2e3e8"></div>
<div class="a" style="left:1268px;top:233px;width:1px;height:18px;background:#e2e3e8"></div>
<div class="a" style="left:1269px;top:233px;width:89px;height:18px;background:#e1e4ed"></div>
<div class="a" style="left:1178px;top:252px;width:8px;height:18px;background:#f1f1f4"></div>
<div class="a" style="left:1178px;top:270px;width:180px;height:1px;background:#e2e3e8"></div>
<div class="a" style="left:1268px;top:252px;width:1px;height:18px;background:#e2e3e8"></div>
<div class="a" style="left:1269px;top:252px;width:89px;height:18px;background:#e1e4ed"></div>
<div class="a" style="left:1178px;top:271px;width:8px;height:18px;background:#f1f1f4"></div>
<div class="a" style="left:1178px;top:289px;width:180px;height:1px;background:#e2e3e8"></div>
<div class="a" style="left:1268px;top:271px;width:1px;height:18px;background:#e2e3e8"></div>
<div class="a" style="left:1341px;top:271px;width:17px;height:18px;background:#f0f0f0;border:1px solid #c4c4c4"></div>
<svg class="a" style="left:1345px;top:277px" width="9" height="7" viewBox="0 0 9 7"><path d="M1 1.2L4.5 5L8 1.2" fill="none" stroke="#444" stroke-width="1.5"/></svg>
<div class="a" style="left:1178px;top:289px;width:180px;height:24px;background:#f7f7fa;border-top:1px solid #e2e3e8;border-bottom:1px solid #e2e3e8"></div>
<div class="a" style="left:1178px;top:313px;width:8px;height:18px;background:#f1f1f4"></div>
<div class="a" style="left:1178px;top:331px;width:180px;height:1px;background:#e2e3e8"></div>
<div class="a" style="left:1268px;top:313px;width:1px;height:18px;background:#e2e3e8"></div>
<div class="a" style="left:1178px;top:332px;width:8px;height:18px;background:#f1f1f4"></div>
<div class="a" style="left:1178px;top:350px;width:180px;height:1px;background:#e2e3e8"></div>
<div class="a" style="left:1268px;top:332px;width:1px;height:18px;background:#e2e3e8"></div>
<div class="a" style="left:1178px;top:351px;width:8px;height:18px;background:#f1f1f4"></div>
<div class="a" style="left:1178px;top:369px;width:180px;height:1px;background:#e2e3e8"></div>
<div class="a" style="left:1268px;top:351px;width:1px;height:18px;background:#e2e3e8"></div>
<div class="a" style="left:1178px;top:370px;width:8px;height:18px;background:#f1f1f4"></div>
<div class="a" style="left:1178px;top:388px;width:180px;height:1px;background:#e2e3e8"></div>
<div class="a" style="left:1268px;top:370px;width:1px;height:18px;background:#e2e3e8"></div>
<div class="a" style="left:1178px;top:389px;width:8px;height:18px;background:#f1f1f4"></div>
<div class="a" style="left:1178px;top:407px;width:180px;height:1px;background:#e2e3e8"></div>
<div class="a" style="left:1268px;top:389px;width:1px;height:18px;background:#e2e3e8"></div>
<div class="a" style="left:1178px;top:408px;width:8px;height:18px;background:#f1f1f4"></div>
<div class="a" style="left:1178px;top:426px;width:180px;height:1px;background:#e2e3e8"></div>
<div class="a" style="left:1268px;top:408px;width:1px;height:18px;background:#e2e3e8"></div>
<div class="a" style="left:1270px;top:408px;width:88px;height:17px;background:linear-gradient(#f6f6f6,#e3e3e3);border:1px solid #a8a8a8;border-radius:1px"></div>
<div class="a" style="left:1178px;top:426px;width:180px;height:24px;background:#f7f7fa;border-top:1px solid #e2e3e8;border-bottom:1px solid #e2e3e8"></div>
<div class="a" style="left:1178px;top:450px;width:8px;height:18px;background:#f1f1f4"></div>
<div class="a" style="left:1178px;top:468px;width:180px;height:1px;background:#e2e3e8"></div>
<div class="a" style="left:1268px;top:450px;width:1px;height:18px;background:#e2e3e8"></div>
<div class="a" style="left:1178px;top:469px;width:8px;height:18px;background:#f1f1f4"></div>
<div class="a" style="left:1178px;top:487px;width:180px;height:1px;background:#e2e3e8"></div>
<div class="a" style="left:1268px;top:469px;width:1px;height:18px;background:#e2e3e8"></div>
<div class="a" style="left:1178px;top:488px;width:8px;height:18px;background:#f1f1f4"></div>
<div class="a" style="left:1178px;top:506px;width:180px;height:1px;background:#e2e3e8"></div>
<div class="a" style="left:1268px;top:488px;width:1px;height:18px;background:#e2e3e8"></div>
<div class="a" style="left:1178px;top:507px;width:8px;height:18px;background:#f1f1f4"></div>
<div class="a" style="left:1178px;top:525px;width:180px;height:1px;background:#e2e3e8"></div>
<div class="a" style="left:1268px;top:507px;width:1px;height:18px;background:#e2e3e8"></div>
<div class="a" style="left:1270px;top:507px;width:88px;height:17px;background:linear-gradient(#f6f6f6,#e3e3e3);border:1px solid #a8a8a8;border-radius:1px"></div>
<div class="a" style="left:1178px;top:525px;width:180px;height:24px;background:#f7f7fa;border-top:1px solid #e2e3e8;border-bottom:1px solid #e2e3e8"></div>
<div class="a" style="left:1178px;top:549px;width:8px;height:18px;background:#f1f1f4"></div>
<div class="a" style="left:1178px;top:567px;width:180px;height:1px;background:#e2e3e8"></div>
<div class="a" style="left:1268px;top:549px;width:1px;height:18px;background:#e2e3e8"></div>
<div class="a" style="left:1341px;top:549px;width:17px;height:17px;background:linear-gradient(#f6f6f6,#e3e3e3);border:1px solid #a8a8a8"></div>
<div class="a" style="left:1178px;top:568px;width:8px;height:18px;background:#f1f1f4"></div>
<div class="a" style="left:1178px;top:586px;width:180px;height:1px;background:#e2e3e8"></div>
<div class="a" style="left:1268px;top:568px;width:1px;height:18px;background:#e2e3e8"></div>
<div class="a" style="left:1273px;top:570px;width:13px;height:13px;background:#fff;border:1px solid #2a2a2a"></div>
<svg class="a" style="left:1275px;top:572px" width="9" height="9" viewBox="0 0 9 9"><path d="M1 4.2L3.4 7L8 1.2" fill="none" stroke="#111" stroke-width="1.7"/></svg>
<div class="a" style="left:1178px;top:587px;width:8px;height:18px;background:#f1f1f4"></div>
<div class="a" style="left:1178px;top:605px;width:180px;height:1px;background:#e2e3e8"></div>
<div class="a" style="left:1268px;top:587px;width:1px;height:18px;background:#e2e3e8"></div>
<div class="a" style="left:1273px;top:589px;width:13px;height:13px;background:#fff;border:1px solid #2a2a2a"></div>
<svg class="a" style="left:1275px;top:591px" width="9" height="9" viewBox="0 0 9 9"><path d="M1 4.2L3.4 7L8 1.2" fill="none" stroke="#111" stroke-width="1.7"/></svg>
<svg class="a" style="left:0;top:0" width="1366" height="768" viewBox="0 0 1366 768" font-family="'Liberation Sans',sans-serif">
<text x="445.00" y="17" font-size="14.3" letter-spacing="0.750" fill="#1b1b1b">3D</text>
<text x="468.00" y="17" font-size="14.3" letter-spacing="0.600" fill="#1b1b1b">printed.3dm</text>
<text x="552.80" y="17" font-size="14.3" letter-spacing="-0.031" fill="#1b1b1b">(152 KB)</text>
<text x="612.40" y="17" font-size="14.3" fill="#1b1b1b">-</text>
<text x="622.60" y="17" font-size="14.3" letter-spacing="0.064" fill="#1b1b1b">Rhinoceros</text>
<text x="699.00" y="17" font-size="14.3" letter-spacing="0.678" fill="#1b1b1b">Corporate</text>
<text x="771.00" y="17" font-size="14.3" letter-spacing="0.750" fill="#1b1b1b">(32-bit)</text>
<text x="825.60" y="17" font-size="14.3" fill="#1b1b1b">-</text>
<text x="835.50" y="17" font-size="14.3" letter-spacing="0.138" fill="#1b1b1b">[Perspective]</text>
<text x="6.65" y="37" font-size="12.2" letter-spacing="-0.144">File</text>
<text x="38.15" y="37" font-size="12.2" letter-spacing="0.131">Edit</text>
<text x="72.15" y="37" font-size="12.2" letter-spacing="0.268">View</text>
<text x="111.65" y="37" font-size="12.2" letter-spacing="-0.077">Curve</text>
<text x="156.45" y="37" font-size="12.2" letter-spacing="-0.268">Surface</text>
<text x="209.45" y="37" font-size="12.2" letter-spacing="-0.175">Solid</text>
<text x="249.15" y="37" font-size="12.2" letter-spacing="-0.035">Mesh</text>
<text x="292.35" y="37" font-size="12.2" letter-spacing="0.079">Dimension</text>
<text x="363.45" y="37" font-size="12.2" letter-spacing="0.104">Transform</text>
<text x="432.85" y="37" font-size="12.2" letter-spacing="0.389">Tools</text>
<text x="475.35" y="37" font-size="12.2" letter-spacing="-0.209">Analyze</text>
<text x="530.35" y="37" font-size="12.2" letter-spacing="-0.215">Render</text>
<text x="581.35" y="37" font-size="12.2" letter-spacing="-0.352">Panels</text>
<text x="629.15" y="37" font-size="12.2" letter-spacing="0.477">Help</text>
<text x="7.56" y="58" font-size="12" letter-spacing="0.177">Loading</text>
<text x="55.66" y="58" font-size="12" letter-spacing="0.330">Rhino</text>
<text x="92.16" y="58" font-size="12" letter-spacing="0.441">Render,</text>
<text x="139.66" y="58" font-size="12" letter-spacing="0.165">version</text>
<text x="183.16" y="58" font-size="12" letter-spacing="0.244">1.50,</text>
<text x="214.66" y="58" font-size="12" letter-spacing="0.168">Nov</text>
<text x="240.16" y="58" font-size="12" letter-spacing="-0.800">12</text>
<text x="255.66" y="58" font-size="12" letter-spacing="0.412">2013,</text>
<text x="290.66" y="58" font-size="12" letter-spacing="-0.291">18:42:48</text>
<text x="7.76" y="87" font-size="12" letter-spacing="-0.099" font-weight="700">Command:</text>
<text x="15.92" y="113" font-size="11.2" letter-spacing="-0.177">Standard</text>
<text x="76.52" y="113" font-size="11.2" letter-spacing="0.045">CPlanes</text>
<text x="135.92" y="113" font-size="11.2" letter-spacing="-0.012">Set View</text>
<text x="195.92" y="113" font-size="11.2" letter-spacing="0.247">Display</text>
<text x="249.92" y="113" font-size="11.2" letter-spacing="0.295">Select</text>
<text x="297.52" y="113" font-size="11.2">Viewport Layout</text>
<text x="390.92" y="113" font-size="11.2" letter-spacing="0.328">Visibility</text>
<text x="447.72" y="113" font-size="11.2" letter-spacing="0.113">Transform</text>
<text x="513.52" y="113" font-size="11.2" letter-spacing="0.239">Curve Tools</text>
<text x="589.92" y="113" font-size="11.2" letter-spacing="0.132">Surface Tools</text>
<text x="674.22" y="113" font-size="11.2" letter-spacing="0.196">Solid Tools</text>
<text x="745.92" y="113" font-size="11.2" letter-spacing="0.197">Mesh Tools</text>
<text x="819.92" y="113" font-size="11.2" letter-spacing="0.168">Render Tools</text>
<text x="903.72" y="113" font-size="11.2" letter-spacing="0.126">Drafting</text>
<text x="959.72" y="113" font-size="11.2" letter-spacing="0.071">New in V5</text>
<text x="6.66" y="763" font-size="12" letter-spacing="0.364">CPlane</text>
<text x="79.66" y="763" font-size="12" letter-spacing="0.217">x 36.57</text>
<text x="171.66" y="763" font-size="12" letter-spacing="0.195">y 2.92</text>
<text x="259.66" y="763" font-size="12">z 0.00</text>
<text x="334.16" y="763" font-size="12" letter-spacing="0.334">Millimeters</text>
<text x="427.16" y="763" font-size="12" letter-spacing="0.441">Default</text>
<text x="591.46" y="763" font-size="12" letter-spacing="0.206">Grid Snap</text>
<text x="665.36" y="763" font-size="12" letter-spacing="0.266">Ortho</text>
<text x="713.36" y="763" font-size="12" letter-spacing="0.478">Planar</text>
<text x="766.56" y="763" font-size="12" letter-spacing="0.580">Osnap</text>
<text x="822.16" y="763" font-size="12" letter-spacing="0.212" font-weight="700">SmartTrack</text>
<text x="906.86" y="763" font-size="12" letter-spacing="0.382">Gumball</text>
<text x="977.56" y="763" font-size="12" letter-spacing="0.240">Record History</text>
<text x="1081.16" y="763" font-size="12" letter-spacing="0.402">Filter</text>
<text x="1120.66" y="763" font-size="12" letter-spacing="0.025">Memory use: 147 MB</text>
<text x="76.44" y="741" font-size="15.2" letter-spacing="-0.343" fill="#111">Perspective</text>
<text x="173.94" y="741" font-size="15.2" letter-spacing="0.750" fill="#111">Top</text>
<text x="223.94" y="741" font-size="15.2" letter-spacing="0.244" fill="#111">Front</text>
<text x="280.94" y="741" font-size="15.2" letter-spacing="0.540" fill="#111">Right</text>
<text x="73.15" y="168" font-size="12.1" letter-spacing="-0.269" fill="#111">Perspective</text>
<text x="103.42" y="658" font-size="12.5" fill="#555">z</text>
<text x="99.53" y="683" font-size="12.5" fill="#555">x</text>
<text x="71.83" y="688" font-size="12.5" fill="#555">y</text>
<text x="1308.34" y="178" font-size="9.5" font-weight="700" fill="#fff">?</text>
<text x="1195.83" y="176" font-size="11" letter-spacing="-0.385" fill="#111">P...</text>
<text x="1238.03" y="176" font-size="11" letter-spacing="-0.800" fill="#111">L...</text>
<text x="1280.23" y="176" font-size="11" letter-spacing="-0.506" fill="#111">Di...</text>
<text x="1322.23" y="176" font-size="11" letter-spacing="-0.528" fill="#111">H...</text>
<text x="1180.53" y="207" font-size="11" letter-spacing="-0.196" fill="#111">Viewport</text>
<text x="1189.53" y="228" font-size="11" letter-spacing="-0.034" fill="#111">Title</text>
<text x="1272.23" y="228" font-size="11" letter-spacing="-0.094" fill="#111">Perspective</text>
<text x="1189.53" y="247" font-size="11" letter-spacing="0.029" fill="#8d8d8d">Width</text>
<text x="1272.23" y="247" font-size="11" letter-spacing="0.461" fill="#8d8d8d">1100</text>
<text x="1189.53" y="266" font-size="11" letter-spacing="-0.111" fill="#8d8d8d">Height</text>
<text x="1272.23" y="266" font-size="11" letter-spacing="0.390" fill="#8d8d8d">567</text>
<text x="1189.53" y="285" font-size="11" letter-spacing="-0.187" fill="#111">Projection</text>
<text x="1272.23" y="285" font-size="11" letter-spacing="-0.094" fill="#111">Perspective</text>
<text x="1180.53" y="306" font-size="11" letter-spacing="-0.517" fill="#111">Camera</text>
<text x="1189.53" y="327" font-size="11" letter-spacing="-0.132" fill="#111">Lens Length</text>
<text x="1272.23" y="327" font-size="11" letter-spacing="0.273" fill="#111">50.0</text>
<text x="1189.53" y="346" font-size="11" letter-spacing="-0.149" fill="#111">Rotation</text>
<text x="1272.23" y="346" font-size="11" letter-spacing="0.372" fill="#111">0.0</text>
<text x="1189.53" y="365" font-size="11" letter-spacing="-0.083" fill="#111">X Location</text>
<text x="1272.23" y="365" font-size="11" letter-spacing="-0.028" fill="#111">-166.640</text>
<text x="1189.53" y="384" font-size="11" letter-spacing="-0.062" fill="#111">Y Location</text>
<text x="1272.23" y="384" font-size="11" letter-spacing="0.037" fill="#111">19.756</text>
<text x="1189.53" y="403" font-size="11" letter-spacing="-0.015" fill="#111">Z Location</text>
<text x="1272.23" y="403" font-size="11" letter-spacing="0.037" fill="#111">27.154</text>
<text x="1189.53" y="422" font-size="11" letter-spacing="-0.093" fill="#111">Location</text>
<text x="1296.73" y="422" font-size="11" letter-spacing="-0.021" fill="#111">Place...</text>
<text x="1180.53" y="443" font-size="11" letter-spacing="0.192" fill="#111">Target</text>
<text x="1189.53" y="464" font-size="11" letter-spacing="-0.020" fill="#111">X Target</text>
<text x="1272.23" y="464" font-size="11" letter-spacing="0.067" fill="#111">-1.393</text>
<text x="1189.53" y="483" font-size="11" letter-spacing="0.009" fill="#111">Y Target</text>
<text x="1272.23" y="483" font-size="11" letter-spacing="0.205" fill="#111">1.511</text>
<text x="1189.53" y="502" font-size="11" letter-spacing="0.069" fill="#111">Z Target</text>
<text x="1272.23" y="502" font-size="11" letter-spacing="0.067" fill="#111">-0.966</text>
<text x="1189.53" y="521" font-size="11" letter-spacing="-0.093" fill="#111">Location</text>
<text x="1296.73" y="521" font-size="11" letter-spacing="-0.021" fill="#111">Place...</text>
<text x="1180.53" y="542" font-size="11" letter-spacing="-0.073" fill="#111">Wallpaper</text>
<text x="1189.53" y="563" font-size="11" letter-spacing="-0.430" fill="#111">Filename</text>
<text x="1270.53" y="563" font-size="11" letter-spacing="-0.191" fill="#111">(none)</text>
<text x="1345.23" y="560" font-size="11" letter-spacing="0.184" fill="#111">...</text>
<text x="1189.53" y="582" font-size="11" letter-spacing="-0.097" fill="#111">Show</text>
<text x="1189.53" y="601" font-size="11" letter-spacing="-0.535" fill="#111">Gray</text>
</svg>
</body></html>
